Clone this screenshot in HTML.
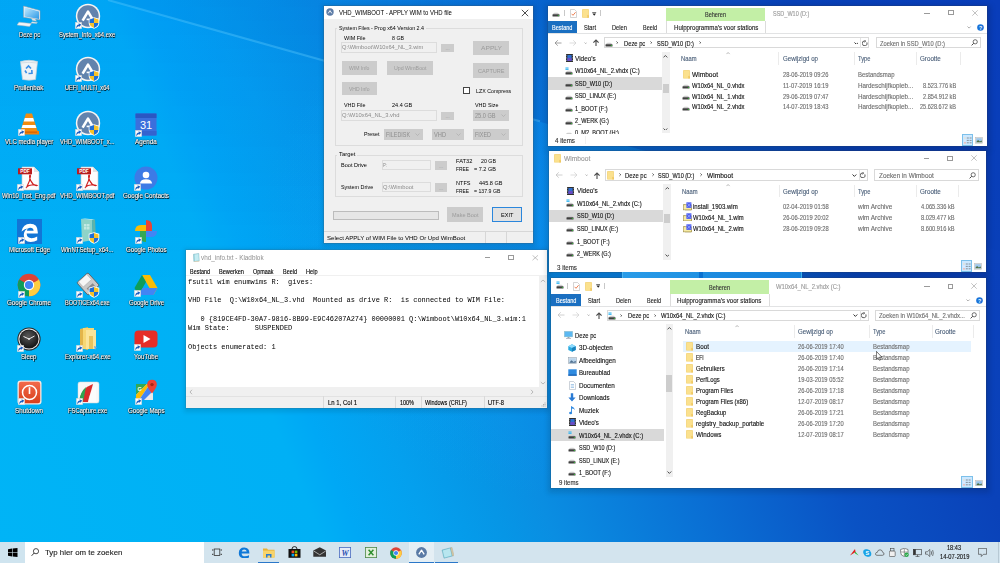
<!DOCTYPE html><html><head><meta charset="utf-8"><style>
html,body{margin:0;padding:0;}
body{width:1000px;height:563px;overflow:hidden;position:relative;font-family:"Liberation Sans",sans-serif;}
.a{position:absolute;}
.t{position:absolute;white-space:pre;line-height:1;}
.k{-webkit-text-stroke:0.12px currentColor;}
.m{font-family:"Liberation Mono",monospace;}
</style></head><body><div class="a" style="left:0.00px;top:0.00px;width:1000.00px;height:563.00px;background:linear-gradient(68deg,#00b4f6 0%,#00b0f5 27%,#00a8f5 30%,#04a0ee 36%,#0696e6 42%,#0a8ee2 46%,#0a6fd4 59%,#0a52c4 71%,#0a42b9 83%,#0a3ebc 100%);"></div><div class="a" style="left:0.00px;top:0.00px;width:1000.00px;height:563.00px;background:linear-gradient(180deg,rgba(0,60,250,.09) 0%,rgba(0,60,250,.05) 25%,rgba(0,60,250,0) 55%);-webkit-mask-image:linear-gradient(90deg,#000 0%,#000 35%,transparent 60%);"></div><svg class="a" style="left:0.00px;top:0.00px;" width="1000" height="563" viewBox="0 0 1000 563"><defs><radialGradient id="lg" gradientUnits="userSpaceOnUse" cx="560" cy="230" r="300" gradientTransform="translate(560 230) scale(1 0.9) translate(-560 -230)"><stop offset="0" stop-color="#0aa0fa" stop-opacity="0.42"/><stop offset="0.6" stop-color="#0aa0fa" stop-opacity="0.22"/><stop offset="1" stop-color="#0aa0fa" stop-opacity="0"/></radialGradient><clipPath id="bc"><path d="M100 0 L1000 249 L1000 563 L0 563 L0 0Z"/></clipPath></defs><rect x="0" y="0" width="1000" height="563" fill="url(#lg)" clip-path="url(#bc)"/><rect x="0" y="0" width="1000" height="563" fill="url(#lg)" opacity="0.35"/><defs><filter id="bb" x="-5%" y="-50%" width="110%" height="200%"><feGaussianBlur stdDeviation="0.7"/></filter></defs><path d="M108 0 L1000 250.7 L1000 0Z" fill="#003a9a" opacity="0.05"/><line x1="108" y1="0" x2="540" y2="121.3" stroke="#66d0ff" stroke-width="2" opacity="0.35" filter="url(#bb)"/></svg><div class="t k" style="left:18.55px;top:31.90px;font-size:6.6px;color:#fff;transform:scaleX(0.8715);transform-origin:0 0;text-shadow:0.6px 0.7px 0.5px #000,0 0 1.4px #000,0 0 1px rgba(0,0,0,.6);">Deze pc</div><div class="t k" style="left:59.40px;top:31.90px;font-size:6.6px;color:#fff;transform:scaleX(0.8855);transform-origin:0 0;text-shadow:0.6px 0.7px 0.5px #000,0 0 1.4px #000,0 0 1px rgba(0,0,0,.6);">System_Info_x64.exe</div><div class="t k" style="left:14.45px;top:85.40px;font-size:6.6px;color:#fff;transform:scaleX(0.9396);transform-origin:0 0;text-shadow:0.6px 0.7px 0.5px #000,0 0 1.4px #000,0 0 1px rgba(0,0,0,.6);">Prullenbak</div><div class="t k" style="left:65.30px;top:85.40px;font-size:6.6px;color:#fff;transform:scaleX(0.8486);transform-origin:0 0;text-shadow:0.6px 0.7px 0.5px #000,0 0 1.4px #000,0 0 1px rgba(0,0,0,.6);">UEFI_MULTI_x64</div><div class="t k" style="left:4.95px;top:139.40px;font-size:6.6px;color:#fff;transform:scaleX(0.9208);transform-origin:0 0;text-shadow:0.6px 0.7px 0.5px #000,0 0 1.4px #000,0 0 1px rgba(0,0,0,.6);">VLC media player</div><div class="t k" style="left:60.25px;top:139.40px;font-size:6.6px;color:#fff;transform:scaleX(0.8743);transform-origin:0 0;text-shadow:0.6px 0.7px 0.5px #000,0 0 1.4px #000,0 0 1px rgba(0,0,0,.6);">VHD_WIMBOOT_x...</div><div class="t k" style="left:135.20px;top:139.40px;font-size:6.6px;color:#fff;transform:scaleX(0.9581);transform-origin:0 0;text-shadow:0.6px 0.7px 0.5px #000,0 0 1.4px #000,0 0 1px rgba(0,0,0,.6);">Agenda</div><div class="t k" style="left:2.35px;top:193.40px;font-size:6.6px;color:#fff;transform:scaleX(0.9001);transform-origin:0 0;text-shadow:0.6px 0.7px 0.5px #000,0 0 1.4px #000,0 0 1px rgba(0,0,0,.6);">Win10_Inst_Eng.pdf</div><div class="t k" style="left:60.25px;top:193.40px;font-size:6.6px;color:#fff;transform:scaleX(0.9062);transform-origin:0 0;text-shadow:0.6px 0.7px 0.5px #000,0 0 1.4px #000,0 0 1px rgba(0,0,0,.6);">VHD_WIMBOOT.pdf</div><div class="t k" style="left:123.10px;top:193.40px;font-size:6.6px;color:#fff;transform:scaleX(0.9357);transform-origin:0 0;text-shadow:0.6px 0.7px 0.5px #000,0 0 1.4px #000,0 0 1px rgba(0,0,0,.6);">Google Contacts</div><div class="t k" style="left:8.50px;top:246.90px;font-size:6.6px;color:#fff;transform:scaleX(0.9360);transform-origin:0 0;text-shadow:0.6px 0.7px 0.5px #000,0 0 1.4px #000,0 0 1px rgba(0,0,0,.6);">Microsoft Edge</div><div class="t k" style="left:61.25px;top:246.90px;font-size:6.6px;color:#fff;transform:scaleX(0.9175);transform-origin:0 0;text-shadow:0.6px 0.7px 0.5px #000,0 0 1.4px #000,0 0 1px rgba(0,0,0,.6);">WinNTSetup_x64...</div><div class="t k" style="left:125.85px;top:246.90px;font-size:6.6px;color:#fff;transform:scaleX(0.9276);transform-origin:0 0;text-shadow:0.6px 0.7px 0.5px #000,0 0 1.4px #000,0 0 1px rgba(0,0,0,.6);">Google Photos</div><div class="t k" style="left:7.10px;top:300.40px;font-size:6.6px;color:#fff;transform:scaleX(0.9445);transform-origin:0 0;text-shadow:0.6px 0.7px 0.5px #000,0 0 1.4px #000,0 0 1px rgba(0,0,0,.6);">Google Chrome</div><div class="t k" style="left:65.20px;top:300.40px;font-size:6.6px;color:#fff;transform:scaleX(0.8444);transform-origin:0 0;text-shadow:0.6px 0.7px 0.5px #000,0 0 1.4px #000,0 0 1px rgba(0,0,0,.6);">BOOTICEx64.exe</div><div class="t k" style="left:128.60px;top:300.40px;font-size:6.6px;color:#fff;transform:scaleX(0.9087);transform-origin:0 0;text-shadow:0.6px 0.7px 0.5px #000,0 0 1.4px #000,0 0 1px rgba(0,0,0,.6);">Google Drive</div><div class="t k" style="left:21.35px;top:354.40px;font-size:6.6px;color:#fff;transform:scaleX(0.9183);transform-origin:0 0;text-shadow:0.6px 0.7px 0.5px #000,0 0 1.4px #000,0 0 1px rgba(0,0,0,.6);">Sleep</div><div class="t k" style="left:64.70px;top:354.40px;font-size:6.6px;color:#fff;transform:scaleX(0.9141);transform-origin:0 0;text-shadow:0.6px 0.7px 0.5px #000,0 0 1.4px #000,0 0 1px rgba(0,0,0,.6);">Explorer-x64.exe</div><div class="t k" style="left:134.00px;top:354.40px;font-size:6.6px;color:#fff;transform:scaleX(0.9331);transform-origin:0 0;text-shadow:0.6px 0.7px 0.5px #000,0 0 1.4px #000,0 0 1px rgba(0,0,0,.6);">YouTube</div><div class="t k" style="left:15.10px;top:407.90px;font-size:6.6px;color:#fff;transform:scaleX(0.9539);transform-origin:0 0;text-shadow:0.6px 0.7px 0.5px #000,0 0 1.4px #000,0 0 1px rgba(0,0,0,.6);">Shutdown</div><div class="t k" style="left:67.90px;top:407.90px;font-size:6.6px;color:#fff;transform:scaleX(0.8832);transform-origin:0 0;text-shadow:0.6px 0.7px 0.5px #000,0 0 1.4px #000,0 0 1px rgba(0,0,0,.6);">FSCapture.exe</div><div class="t k" style="left:127.85px;top:407.90px;font-size:6.6px;color:#fff;transform:scaleX(0.9299);transform-origin:0 0;text-shadow:0.6px 0.7px 0.5px #000,0 0 1.4px #000,0 0 1px rgba(0,0,0,.6);">Google Maps</div><svg class="a" style="left:17.10px;top:5.00px;" width="24" height="22" viewBox="0 0 24 22"><defs><linearGradient id="gpc" x1="0" y1="0" x2="1" y2="1"><stop offset="0" stop-color="#c4ecff"/><stop offset="1" stop-color="#2b98e6"/></linearGradient></defs><path d="M6.5 1 L23 5.6 L23 14.8 L6.5 12.2 Z" fill="#f0f6f9" stroke="#8aa0b0" stroke-width="0.6"/><path d="M7.5 2.3 L22 6.4 L22 14 L7.5 11.6 Z" fill="url(#gpc)"/><path d="M14 13 L15.5 15.6 L19.5 16.3 L18 13.6Z" fill="#dde5ea" stroke="#a8b4bc" stroke-width="0.4"/><path d="M2 17.2 L14.5 18.6 L12.5 21.5 L0 20 Z" fill="#f2f4f6" stroke="#aab6c0" stroke-width="0.5"/><path d="M15 16.8 L20.5 17.5 L19.5 18.6 L14 18Z" fill="#eef1f3" stroke="#aab6c0" stroke-width="0.4"/></svg><svg class="a" style="left:74.50px;top:2.50px;" width="26" height="26" viewBox="0 0 26 26"><circle cx="13" cy="13" r="12.2" fill="#f7f5f2"/><circle cx="13" cy="13" r="10.7" fill="#6283ad"/><path d="M7.6 17.6 L13 8.6 L18.4 17.6" stroke="#fff" stroke-width="2.6" stroke-linejoin="round" fill="none"/><path d="M11.6 16.4 L14.2 16.4" stroke="#fff" stroke-width="1.6"/></svg><svg class="a" style="left:88.30px;top:16.50px;" width="12" height="12" viewBox="0 0 12 12"><path d="M6 0.3 L11.3 1.8 L11.3 6 Q11.2 10.2 6 11.8 Q0.8 10.2 0.7 6 L0.7 1.8 Z" fill="#fff"/><path d="M6 1.1 L6 6 L1.5 6 L1.5 2.4 Z" fill="#1f6fd6"/><path d="M6 1.1 L10.5 2.4 L10.5 6 L6 6Z" fill="#f7c22a"/><path d="M1.5 6 L6 6 L6 10.9 Q1.8 9.6 1.5 6Z" fill="#f7c22a"/><path d="M6 6 L10.5 6 Q10.2 9.6 6 10.9Z" fill="#1f6fd6"/></svg><svg class="a" style="left:75.10px;top:21.90px;" width="7" height="7" viewBox="0 0 7 7"><rect x="0.3" y="0.3" width="6.4" height="6.4" fill="#fcfcfc" stroke="#c8c8c8" stroke-width="0.4"/><path d="M1.2 6.2 Q1.2 2.9 4.0 2.6 L3.4 1.2 L6.2 2.5 L4.4 5.0 L4.2 3.9 Q2.4 4.1 1.2 6.2Z" fill="#1d5fc0"/></svg><svg class="a" style="left:19.10px;top:59.00px;" width="20" height="22" viewBox="0 0 20 22"><path d="M1.5 2.5 Q10 0 18.5 2.5 L16.5 20.5 Q10 21.8 3.5 20.5 Z" fill="#eef3f6" stroke="#c5d0d8" stroke-width="0.7"/><path d="M2 4 Q10 2.5 18 4" stroke="#d5dde3" stroke-width="1" fill="none"/><g fill="none" stroke="#3a8ee6" stroke-width="1.6"><path d="M7 9.5 L9.5 7 L12 9.5"/><path d="M12.8 11 L13 14.2 L9.5 14.5"/><path d="M7.6 14.2 L6 11.5"/></g></svg><svg class="a" style="left:74.50px;top:56.00px;" width="26" height="26" viewBox="0 0 26 26"><circle cx="13" cy="13" r="12.2" fill="#f7f5f2"/><circle cx="13" cy="13" r="10.7" fill="#6283ad"/><path d="M7.6 17.6 L13 8.6 L18.4 17.6" stroke="#fff" stroke-width="2.6" stroke-linejoin="round" fill="none"/><path d="M11.6 16.4 L14.2 16.4" stroke="#fff" stroke-width="1.6"/></svg><svg class="a" style="left:88.30px;top:70.00px;" width="12" height="12" viewBox="0 0 12 12"><path d="M6 0.3 L11.3 1.8 L11.3 6 Q11.2 10.2 6 11.8 Q0.8 10.2 0.7 6 L0.7 1.8 Z" fill="#fff"/><path d="M6 1.1 L6 6 L1.5 6 L1.5 2.4 Z" fill="#1f6fd6"/><path d="M6 1.1 L10.5 2.4 L10.5 6 L6 6Z" fill="#f7c22a"/><path d="M1.5 6 L6 6 L6 10.9 Q1.8 9.6 1.5 6Z" fill="#f7c22a"/><path d="M6 6 L10.5 6 Q10.2 9.6 6 10.9Z" fill="#1f6fd6"/></svg><svg class="a" style="left:75.10px;top:75.40px;" width="7" height="7" viewBox="0 0 7 7"><rect x="0.3" y="0.3" width="6.4" height="6.4" fill="#fcfcfc" stroke="#c8c8c8" stroke-width="0.4"/><path d="M1.2 6.2 Q1.2 2.9 4.0 2.6 L3.4 1.2 L6.2 2.5 L4.4 5.0 L4.2 3.9 Q2.4 4.1 1.2 6.2Z" fill="#1d5fc0"/></svg><svg class="a" style="left:18.10px;top:111.50px;" width="22" height="24" viewBox="0 0 22 24"><path d="M8 1.5 L14 1.5 L19.5 19 L2.5 19 Z" fill="#f28c0f"/><path d="M6.8 6 L15.2 6 L16.3 9.5 L5.7 9.5Z" fill="#fff"/><path d="M4.6 13 L17.4 13 L18.4 16 L3.6 16Z" fill="#fff"/><path d="M1 19 L21 19 L21 22.5 L1 22.5Z" fill="#ef7f0a"/><path d="M3 19.5 L19 19.5 L19 21 L3 21Z" fill="#d56a05"/></svg><svg class="a" style="left:18.10px;top:129.00px;" width="7" height="7" viewBox="0 0 7 7"><rect x="0.3" y="0.3" width="6.4" height="6.4" fill="#fcfcfc" stroke="#c8c8c8" stroke-width="0.4"/><path d="M1.2 6.2 Q1.2 2.9 4.0 2.6 L3.4 1.2 L6.2 2.5 L4.4 5.0 L4.2 3.9 Q2.4 4.1 1.2 6.2Z" fill="#1d5fc0"/></svg><svg class="a" style="left:74.50px;top:110.00px;" width="26" height="26" viewBox="0 0 26 26"><circle cx="13" cy="13" r="12.2" fill="#f7f5f2"/><circle cx="13" cy="13" r="10.7" fill="#6283ad"/><path d="M7.6 17.6 L13 8.6 L18.4 17.6" stroke="#fff" stroke-width="2.6" stroke-linejoin="round" fill="none"/><path d="M11.6 16.4 L14.2 16.4" stroke="#fff" stroke-width="1.6"/></svg><svg class="a" style="left:88.30px;top:124.00px;" width="12" height="12" viewBox="0 0 12 12"><path d="M6 0.3 L11.3 1.8 L11.3 6 Q11.2 10.2 6 11.8 Q0.8 10.2 0.7 6 L0.7 1.8 Z" fill="#fff"/><path d="M6 1.1 L6 6 L1.5 6 L1.5 2.4 Z" fill="#1f6fd6"/><path d="M6 1.1 L10.5 2.4 L10.5 6 L6 6Z" fill="#f7c22a"/><path d="M1.5 6 L6 6 L6 10.9 Q1.8 9.6 1.5 6Z" fill="#f7c22a"/><path d="M6 6 L10.5 6 Q10.2 9.6 6 10.9Z" fill="#1f6fd6"/></svg><svg class="a" style="left:75.10px;top:129.40px;" width="7" height="7" viewBox="0 0 7 7"><rect x="0.3" y="0.3" width="6.4" height="6.4" fill="#fcfcfc" stroke="#c8c8c8" stroke-width="0.4"/><path d="M1.2 6.2 Q1.2 2.9 4.0 2.6 L3.4 1.2 L6.2 2.5 L4.4 5.0 L4.2 3.9 Q2.4 4.1 1.2 6.2Z" fill="#1d5fc0"/></svg><svg class="a" style="left:135.10px;top:112.50px;" width="22" height="23" viewBox="0 0 22 23"><rect x="0.5" y="0.5" width="21" height="22" rx="1" fill="#3b6fdc"/><rect x="0.5" y="0.5" width="21" height="4.5" fill="#2a57c2"/><rect x="0.5" y="18" width="21" height="4.5" fill="#3463cf"/><text x="11" y="15.8" font-family="Liberation Sans" font-size="11" fill="#fff" text-anchor="middle">31</text></svg><svg class="a" style="left:134.60px;top:129.50px;" width="7" height="7" viewBox="0 0 7 7"><rect x="0.3" y="0.3" width="6.4" height="6.4" fill="#fcfcfc" stroke="#c8c8c8" stroke-width="0.4"/><path d="M1.2 6.2 Q1.2 2.9 4.0 2.6 L3.4 1.2 L6.2 2.5 L4.4 5.0 L4.2 3.9 Q2.4 4.1 1.2 6.2Z" fill="#1d5fc0"/></svg><svg class="a" style="left:18.30px;top:165.50px;" width="24" height="25" viewBox="0 0 24 25"><path d="M4 1 L16 1 L21 6 L21 24 L4 24 Z" fill="#fdfdfd" stroke="#c9c9c9" stroke-width="0.6"/><path d="M16 1 L16 6 L21 6Z" fill="#e3e3e3"/><rect x="0" y="2.3" width="14" height="6" fill="#b81d1d"/><text x="7" y="7.2" font-family="Liberation Sans" font-size="4.8" font-weight="bold" fill="#fff" text-anchor="middle">PDF</text><path d="M9 20.5 Q12 15 12.5 10 Q12.2 7.5 11.6 10 Q11.5 14 15 18 Q17.5 20 19 19.5 Q17 18 11 19.5 Q7.5 21.5 8.5 22" stroke="#d0201f" stroke-width="1.2" fill="none"/></svg><svg class="a" style="left:17.10px;top:183.50px;" width="7" height="7" viewBox="0 0 7 7"><rect x="0.3" y="0.3" width="6.4" height="6.4" fill="#fcfcfc" stroke="#c8c8c8" stroke-width="0.4"/><path d="M1.2 6.2 Q1.2 2.9 4.0 2.6 L3.4 1.2 L6.2 2.5 L4.4 5.0 L4.2 3.9 Q2.4 4.1 1.2 6.2Z" fill="#1d5fc0"/></svg><svg class="a" style="left:76.70px;top:165.50px;" width="24" height="25" viewBox="0 0 24 25"><path d="M4 1 L16 1 L21 6 L21 24 L4 24 Z" fill="#fdfdfd" stroke="#c9c9c9" stroke-width="0.6"/><path d="M16 1 L16 6 L21 6Z" fill="#e3e3e3"/><rect x="0" y="2.3" width="14" height="6" fill="#b81d1d"/><text x="7" y="7.2" font-family="Liberation Sans" font-size="4.8" font-weight="bold" fill="#fff" text-anchor="middle">PDF</text><path d="M9 20.5 Q12 15 12.5 10 Q12.2 7.5 11.6 10 Q11.5 14 15 18 Q17.5 20 19 19.5 Q17 18 11 19.5 Q7.5 21.5 8.5 22" stroke="#d0201f" stroke-width="1.2" fill="none"/></svg><svg class="a" style="left:75.50px;top:183.50px;" width="7" height="7" viewBox="0 0 7 7"><rect x="0.3" y="0.3" width="6.4" height="6.4" fill="#fcfcfc" stroke="#c8c8c8" stroke-width="0.4"/><path d="M1.2 6.2 Q1.2 2.9 4.0 2.6 L3.4 1.2 L6.2 2.5 L4.4 5.0 L4.2 3.9 Q2.4 4.1 1.2 6.2Z" fill="#1d5fc0"/></svg><svg class="a" style="left:134.10px;top:165.50px;" width="24" height="24" viewBox="0 0 24 24"><circle cx="12" cy="12" r="11.5" fill="#3d7be6"/><circle cx="12" cy="9" r="3.3" fill="#fff"/><path d="M5.8 17.5 Q6.5 13.2 12 13.2 Q17.5 13.2 18.2 17.5 Z" fill="#fff"/></svg><svg class="a" style="left:134.10px;top:183.50px;" width="7" height="7" viewBox="0 0 7 7"><rect x="0.3" y="0.3" width="6.4" height="6.4" fill="#fcfcfc" stroke="#c8c8c8" stroke-width="0.4"/><path d="M1.2 6.2 Q1.2 2.9 4.0 2.6 L3.4 1.2 L6.2 2.5 L4.4 5.0 L4.2 3.9 Q2.4 4.1 1.2 6.2Z" fill="#1d5fc0"/></svg><svg class="a" style="left:17.10px;top:219.00px;" width="25" height="25" viewBox="0 0 25 25"><rect x="0" y="0" width="25" height="25" fill="#1275d6"/><path d="M4.5 12.5 Q6 4.8 13.2 4.8 Q20.8 4.8 20.8 13.2 L20.8 14.6 L9.6 14.6 Q10 19.2 14.6 19.2 Q17.6 19.2 20.2 17.6 L20.2 21.2 Q17.6 23 13.6 23 Q6.8 23 6.8 16 Q6.8 10.8 11.6 9.2 Q7.6 9.8 4.5 12.5Z M9.8 11.8 L16.6 11.8 Q16.4 8.8 13.2 8.8 Q10.4 8.8 9.8 11.8Z" fill="#fff" fill-rule="evenodd"/></svg><svg class="a" style="left:17.60px;top:237.00px;" width="7" height="7" viewBox="0 0 7 7"><rect x="0.3" y="0.3" width="6.4" height="6.4" fill="#fcfcfc" stroke="#c8c8c8" stroke-width="0.4"/><path d="M1.2 6.2 Q1.2 2.9 4.0 2.6 L3.4 1.2 L6.2 2.5 L4.4 5.0 L4.2 3.9 Q2.4 4.1 1.2 6.2Z" fill="#1d5fc0"/></svg><svg class="a" style="left:76.50px;top:218.00px;" width="22" height="26" viewBox="0 0 22 26"><path d="M4 1 L15 2 L16 22 L5 24 Z" fill="#8fd3c8"/><path d="M4 1 L8 0.5 L18 1.5 L15 2Z" fill="#c6ece6"/><path d="M15 2 L18 1.5 L19 21 L16 22Z" fill="#5fb3a8"/><g fill="#d9f3ef" opacity="0.7"><rect x="7" y="6" width="2.5" height="2.5"/><rect x="10" y="6" width="2.5" height="2.5"/><rect x="7" y="9" width="2.5" height="2.5"/><rect x="10" y="9" width="2.5" height="2.5"/></g></svg><svg class="a" style="left:88.00px;top:232.00px;" width="12" height="12" viewBox="0 0 12 12"><path d="M6 0.3 L11.3 1.8 L11.3 6 Q11.2 10.2 6 11.8 Q0.8 10.2 0.7 6 L0.7 1.8 Z" fill="#fff"/><path d="M6 1.1 L6 6 L1.5 6 L1.5 2.4 Z" fill="#1f6fd6"/><path d="M6 1.1 L10.5 2.4 L10.5 6 L6 6Z" fill="#f7c22a"/><path d="M1.5 6 L6 6 L6 10.9 Q1.8 9.6 1.5 6Z" fill="#f7c22a"/><path d="M6 6 L10.5 6 Q10.2 9.6 6 10.9Z" fill="#1f6fd6"/></svg><svg class="a" style="left:75.50px;top:237.00px;" width="7" height="7" viewBox="0 0 7 7"><rect x="0.3" y="0.3" width="6.4" height="6.4" fill="#fcfcfc" stroke="#c8c8c8" stroke-width="0.4"/><path d="M1.2 6.2 Q1.2 2.9 4.0 2.6 L3.4 1.2 L6.2 2.5 L4.4 5.0 L4.2 3.9 Q2.4 4.1 1.2 6.2Z" fill="#1d5fc0"/></svg><svg class="a" style="left:134.10px;top:219.00px;" width="24" height="24" viewBox="0 0 24 24"><g transform="translate(12,12)"><path d="M0 0 L0 -11 Q6 -11 6 -5 L6 0Z" fill="#ea4335" transform="rotate(0)"/><path d="M0 0 L0 -11 Q6 -11 6 -5 L6 0Z" fill="#4285f4" transform="rotate(90)"/><path d="M0 0 L0 -11 Q6 -11 6 -5 L6 0Z" fill="#34a853" transform="rotate(180)"/><path d="M0 0 L0 -11 Q6 -11 6 -5 L6 0Z" fill="#fbbc04" transform="rotate(270)"/></g></svg><svg class="a" style="left:135.10px;top:237.00px;" width="7" height="7" viewBox="0 0 7 7"><rect x="0.3" y="0.3" width="6.4" height="6.4" fill="#fcfcfc" stroke="#c8c8c8" stroke-width="0.4"/><path d="M1.2 6.2 Q1.2 2.9 4.0 2.6 L3.4 1.2 L6.2 2.5 L4.4 5.0 L4.2 3.9 Q2.4 4.1 1.2 6.2Z" fill="#1d5fc0"/></svg><svg class="a" style="left:17.10px;top:272.50px;" width="24" height="24" viewBox="0 0 24 24"><circle cx="12" cy="12" r="11.3" fill="#db4437"/><path d="M12 12 L2.2 6.4 A11.3 11.3 0 0 0 12 23.3 Z" fill="#0f9d58"/><path d="M12 12 L12 23.3 A11.3 11.3 0 0 0 21.8 6.35 Z" fill="#ffcd40"/><path d="M12 6.8 L21.8 6.8 L12 12Z" fill="#db4437"/><circle cx="12" cy="12" r="5.2" fill="#fff"/><circle cx="12" cy="12" r="4.1" fill="#4285f4"/></svg><svg class="a" style="left:17.60px;top:290.50px;" width="7" height="7" viewBox="0 0 7 7"><rect x="0.3" y="0.3" width="6.4" height="6.4" fill="#fcfcfc" stroke="#c8c8c8" stroke-width="0.4"/><path d="M1.2 6.2 Q1.2 2.9 4.0 2.6 L3.4 1.2 L6.2 2.5 L4.4 5.0 L4.2 3.9 Q2.4 4.1 1.2 6.2Z" fill="#1d5fc0"/></svg><svg class="a" style="left:75.50px;top:271.50px;" width="24" height="24" viewBox="0 0 24 24"><g transform="rotate(-42 12 12)"><rect x="4.5" y="3.5" width="15" height="17" rx="1.5" fill="#c9c9c9" stroke="#5a5a5a" stroke-width="0.8"/><rect x="6.5" y="4" width="11" height="7" fill="#f6f6f6" stroke="#9a9a9a" stroke-width="0.4"/><rect x="8" y="14.5" width="8" height="6" fill="#8a8a8a"/></g></svg><svg class="a" style="left:88.00px;top:285.50px;" width="12" height="12" viewBox="0 0 12 12"><path d="M6 0.3 L11.3 1.8 L11.3 6 Q11.2 10.2 6 11.8 Q0.8 10.2 0.7 6 L0.7 1.8 Z" fill="#fff"/><path d="M6 1.1 L6 6 L1.5 6 L1.5 2.4 Z" fill="#1f6fd6"/><path d="M6 1.1 L10.5 2.4 L10.5 6 L6 6Z" fill="#f7c22a"/><path d="M1.5 6 L6 6 L6 10.9 Q1.8 9.6 1.5 6Z" fill="#f7c22a"/><path d="M6 6 L10.5 6 Q10.2 9.6 6 10.9Z" fill="#1f6fd6"/></svg><svg class="a" style="left:75.50px;top:290.50px;" width="7" height="7" viewBox="0 0 7 7"><rect x="0.3" y="0.3" width="6.4" height="6.4" fill="#fcfcfc" stroke="#c8c8c8" stroke-width="0.4"/><path d="M1.2 6.2 Q1.2 2.9 4.0 2.6 L3.4 1.2 L6.2 2.5 L4.4 5.0 L4.2 3.9 Q2.4 4.1 1.2 6.2Z" fill="#1d5fc0"/></svg><svg class="a" style="left:134.10px;top:273.50px;" width="24" height="22" viewBox="0 0 24 22"><path d="M8 1 L16 1 L23.5 14 L19.5 21 Z" fill="#fbbc04"/><path d="M8 1 L0.5 14 L4.5 21 L12 7.9Z" fill="#0f9d58"/><path d="M4.5 21 L19.5 21 L23.5 14 L8.5 14Z" fill="#4285f4"/></svg><svg class="a" style="left:134.10px;top:289.50px;" width="7" height="7" viewBox="0 0 7 7"><rect x="0.3" y="0.3" width="6.4" height="6.4" fill="#fcfcfc" stroke="#c8c8c8" stroke-width="0.4"/><path d="M1.2 6.2 Q1.2 2.9 4.0 2.6 L3.4 1.2 L6.2 2.5 L4.4 5.0 L4.2 3.9 Q2.4 4.1 1.2 6.2Z" fill="#1d5fc0"/></svg><svg class="a" style="left:17.10px;top:326.50px;" width="24" height="24" viewBox="0 0 24 24"><defs><radialGradient id="gsl" cx="0.45" cy="0.35" r="0.7"><stop offset="0" stop-color="#5a5a5a"/><stop offset="1" stop-color="#111"/></radialGradient></defs><circle cx="12" cy="12" r="11.6" fill="#2a2a2a"/><circle cx="12" cy="12" r="10.6" fill="#e8e8e8"/><circle cx="12" cy="12" r="9.6" fill="#1a1a1a"/><circle cx="12" cy="12" r="8.8" fill="url(#gsl)"/><path d="M12 12 L6.8 9.6 M12 12 L17.2 9.2" stroke="#fff" stroke-width="0.9" stroke-linecap="round"/><circle cx="12" cy="12" r="0.8" fill="#fff"/></svg><svg class="a" style="left:17.10px;top:344.50px;" width="7" height="7" viewBox="0 0 7 7"><rect x="0.3" y="0.3" width="6.4" height="6.4" fill="#fcfcfc" stroke="#c8c8c8" stroke-width="0.4"/><path d="M1.2 6.2 Q1.2 2.9 4.0 2.6 L3.4 1.2 L6.2 2.5 L4.4 5.0 L4.2 3.9 Q2.4 4.1 1.2 6.2Z" fill="#1d5fc0"/></svg><svg class="a" style="left:76.50px;top:325.50px;" width="22" height="26" viewBox="0 0 22 26"><path d="M3 3 L11 1 L11 24 L3 22Z" fill="#e3b54a"/><path d="M6 2 L17 2 L17 23 L6 23Z" fill="#f7d774"/><path d="M9 4 L19 4 L19 23 L9 23Z" fill="#fbe49a"/><path d="M12 10 L16 10 L16 23 L12 23Z" fill="#e9c35c"/><path d="M17 20 L20 21 L18 24Z" fill="#6fa8dc"/></svg><svg class="a" style="left:76.00px;top:344.50px;" width="7" height="7" viewBox="0 0 7 7"><rect x="0.3" y="0.3" width="6.4" height="6.4" fill="#fcfcfc" stroke="#c8c8c8" stroke-width="0.4"/><path d="M1.2 6.2 Q1.2 2.9 4.0 2.6 L3.4 1.2 L6.2 2.5 L4.4 5.0 L4.2 3.9 Q2.4 4.1 1.2 6.2Z" fill="#1d5fc0"/></svg><svg class="a" style="left:134.10px;top:329.50px;" width="24" height="18" viewBox="0 0 24 18"><rect x="0.5" y="0.5" width="23" height="17" rx="4" fill="#e52d27"/><path d="M9.5 5 L16.5 9 L9.5 13Z" fill="#fff"/></svg><svg class="a" style="left:134.10px;top:343.50px;" width="7" height="7" viewBox="0 0 7 7"><rect x="0.3" y="0.3" width="6.4" height="6.4" fill="#fcfcfc" stroke="#c8c8c8" stroke-width="0.4"/><path d="M1.2 6.2 Q1.2 2.9 4.0 2.6 L3.4 1.2 L6.2 2.5 L4.4 5.0 L4.2 3.9 Q2.4 4.1 1.2 6.2Z" fill="#1d5fc0"/></svg><svg class="a" style="left:17.10px;top:380.00px;" width="25" height="25" viewBox="0 0 25 25"><defs><linearGradient id="gsd" x1="0" y1="0" x2="0" y2="1"><stop offset="0" stop-color="#f26a4b"/><stop offset="1" stop-color="#d8401c"/></linearGradient></defs><rect x="0.5" y="0.5" width="24" height="24" rx="3" fill="#f7e9e4"/><rect x="1.8" y="1.8" width="21.4" height="21.4" rx="2.2" fill="url(#gsd)"/><circle cx="12.5" cy="12.5" r="7" stroke="#fff" stroke-width="1.5" fill="none"/><rect x="11.7" y="7.2" width="1.6" height="6.8" fill="#fff"/></svg><svg class="a" style="left:17.60px;top:398.00px;" width="7" height="7" viewBox="0 0 7 7"><rect x="0.3" y="0.3" width="6.4" height="6.4" fill="#fcfcfc" stroke="#c8c8c8" stroke-width="0.4"/><path d="M1.2 6.2 Q1.2 2.9 4.0 2.6 L3.4 1.2 L6.2 2.5 L4.4 5.0 L4.2 3.9 Q2.4 4.1 1.2 6.2Z" fill="#1d5fc0"/></svg><svg class="a" style="left:75.50px;top:380.00px;" width="24" height="24" viewBox="0 0 24 24"><rect x="2" y="2" width="21" height="21" rx="2" fill="#f8f8f8" stroke="#d8d8d8" stroke-width="0.5"/><path d="M3 22 Q5 8 17 4 L12 22Z" fill="#d92b2b"/><path d="M3 22 Q4 12 10 7 L7 22Z" fill="#2ea44f"/><path d="M12 22 Q14 10 20 6 L20 22Z" fill="#fff" opacity="0.6"/></svg><svg class="a" style="left:76.00px;top:398.00px;" width="7" height="7" viewBox="0 0 7 7"><rect x="0.3" y="0.3" width="6.4" height="6.4" fill="#fcfcfc" stroke="#c8c8c8" stroke-width="0.4"/><path d="M1.2 6.2 Q1.2 2.9 4.0 2.6 L3.4 1.2 L6.2 2.5 L4.4 5.0 L4.2 3.9 Q2.4 4.1 1.2 6.2Z" fill="#1d5fc0"/></svg><svg class="a" style="left:134.10px;top:379.00px;" width="24" height="24" viewBox="0 0 24 24"><path d="M2 5 L19 5 L19 21 L2 21Z" fill="#e9e9e9"/><path d="M2 5 L13 5 L2 16Z" fill="#34a853"/><path d="M2 16 L13 5 L16 5 L5 21 L2 21Z" fill="#fbbc04"/><path d="M5 21 L16 5 L19 8 L19 21Z" fill="#4285f4"/><path d="M10 21 L19 12 L19 21Z" fill="#e9e9e9"/><text x="3.6" y="11.6" font-family="Liberation Sans" font-size="5.5" font-weight="bold" fill="#fff">G</text><path d="M18 0.8 Q22.8 0.8 22.8 5.6 Q22.8 8.8 18 14.5 Q13.2 8.8 13.2 5.6 Q13.2 0.8 18 0.8Z" fill="#ea4335"/><circle cx="18" cy="5.6" r="1.7" fill="#a52714"/></svg><svg class="a" style="left:134.60px;top:398.00px;" width="7" height="7" viewBox="0 0 7 7"><rect x="0.3" y="0.3" width="6.4" height="6.4" fill="#fcfcfc" stroke="#c8c8c8" stroke-width="0.4"/><path d="M1.2 6.2 Q1.2 2.9 4.0 2.6 L3.4 1.2 L6.2 2.5 L4.4 5.0 L4.2 3.9 Q2.4 4.1 1.2 6.2Z" fill="#1d5fc0"/></svg><div class="a" style="left:322.00px;top:5.00px;width:214.00px;height:242.00px;background:rgba(0,0,0,.10);filter:blur(2px);"></div><div class="a" style="left:324.00px;top:6.00px;width:209.00px;height:237.00px;background:#f0f0f0;box-shadow:0 0 0 0.5px rgba(80,80,80,.45);"></div><div class="a" style="left:324.00px;top:6.00px;width:209.00px;height:13.00px;background:#fff;"></div><svg class="a" style="left:326.30px;top:8.30px;" width="8" height="8" viewBox="0 0 8 8"><circle cx="4" cy="4" r="3.7" fill="#5b7ba6"/><path d="M2.2 5.4 L4 2.6 L5.8 5.4" stroke="#fff" stroke-width="0.9" stroke-linejoin="round" fill="none"/></svg><div class="t" style="left:338.50px;top:9.87px;font-size:6.3px;color:#000;transform:scaleX(0.9494);transform-origin:0 0;">VHD_WIMBOOT - APPLY WIM to VHD file</div><svg class="a" style="left:520.50px;top:8.50px;" width="8" height="8" viewBox="0 0 8 8"><path d="M0.8 0.8 L7.2 7.2 M7.2 0.8 L0.8 7.2" stroke="#222" stroke-width="0.8"/></svg><div class="a" style="left:334.50px;top:28.00px;width:188.50px;height:118.00px;border:1px solid #dcdcdc;box-sizing:border-box;"></div><div class="a" style="left:336.80px;top:25.00px;width:89.20px;height:6.00px;background:#f0f0f0;"></div><div class="t" style="left:338.80px;top:25.33px;font-size:6.2px;color:#000;transform:scaleX(0.8646);transform-origin:0 0;">System Files - Prog x64 Version 2.4</div><div class="t" style="left:344.20px;top:34.93px;font-size:6.2px;color:#000;transform:scaleX(0.8834);transform-origin:0 0;">WIM File</div><div class="t" style="left:392.00px;top:34.93px;font-size:6.2px;color:#000;transform:scaleX(0.8494);transform-origin:0 0;">8 GB</div><div class="a" style="left:341.40px;top:42.40px;width:95.80px;height:10.70px;background:#f0f0f0;border:1px solid #dcdcdc;box-sizing:border-box;"></div><div class="t" style="left:342.30px;top:45.35px;font-size:5.9px;color:#8a8a8a;transform:scaleX(0.9710);transform-origin:0 0;">Q:\Wimboot\W10x64_NL_3.wim</div><div class="a" style="left:441.00px;top:44.00px;width:13.00px;height:8.00px;background:#cccccc;"></div><div class="t" style="left:445.42px;top:46.30px;font-size:5px;color:#9b9b9b;">...</div><div class="a" style="left:473.00px;top:41.00px;width:36.00px;height:14.00px;background:#cccccc;"></div><div class="t" style="left:480.50px;top:45.43px;font-size:6.2px;color:#9b9b9b;transform:scaleX(1.0753);transform-origin:0 0;">APPLY</div><div class="a" style="left:341.80px;top:61.20px;width:35.10px;height:13.50px;background:#cccccc;"></div><div class="t" style="left:349.10px;top:65.38px;font-size:6.2px;color:#9b9b9b;transform:scaleX(0.8265);transform-origin:0 0;">WIM Info</div><div class="a" style="left:387.20px;top:61.20px;width:45.80px;height:13.50px;background:#cccccc;"></div><div class="t" style="left:393.85px;top:65.38px;font-size:6.2px;color:#9b9b9b;transform:scaleX(0.8498);transform-origin:0 0;">Upd WimBoot</div><div class="a" style="left:473.00px;top:63.00px;width:36.00px;height:14.80px;background:#cccccc;"></div><div class="t" style="left:477.75px;top:67.83px;font-size:6.2px;color:#9b9b9b;transform:scaleX(0.8945);transform-origin:0 0;">CAPTURE</div><div class="a" style="left:341.80px;top:82.00px;width:35.10px;height:13.00px;background:#cccccc;"></div><div class="t" style="left:349.10px;top:85.93px;font-size:6.2px;color:#9b9b9b;transform:scaleX(0.8150);transform-origin:0 0;">VHD Info</div><div class="a" style="left:463.00px;top:87.00px;width:6.60px;height:6.60px;background:#fff;border:0.5px solid #444;box-sizing:border-box;"></div><div class="t" style="left:475.80px;top:87.63px;font-size:6.2px;color:#000;transform:scaleX(0.8538);transform-origin:0 0;">LZX Compress</div><div class="t" style="left:344.20px;top:102.33px;font-size:6.2px;color:#000;transform:scaleX(0.8709);transform-origin:0 0;">VHD File</div><div class="t" style="left:392.00px;top:102.33px;font-size:6.2px;color:#000;transform:scaleX(0.8925);transform-origin:0 0;">24.4 GB</div><div class="t" style="left:475.00px;top:102.33px;font-size:6.2px;color:#000;transform:scaleX(0.8744);transform-origin:0 0;">VHD Size</div><div class="a" style="left:341.40px;top:110.00px;width:95.80px;height:10.50px;background:#f0f0f0;border:1px solid #dcdcdc;box-sizing:border-box;"></div><div class="t" style="left:342.30px;top:112.85px;font-size:5.9px;color:#8a8a8a;transform:scaleX(0.9906);transform-origin:0 0;">Q:\W10x64_NL_3.vhd</div><div class="a" style="left:441.00px;top:112.00px;width:13.00px;height:7.50px;background:#cccccc;"></div><div class="t" style="left:445.42px;top:114.05px;font-size:5px;color:#9b9b9b;">...</div><div class="a" style="left:473.00px;top:110.00px;width:36.00px;height:10.50px;background:#cccccc;"></div><div class="t" style="left:475.00px;top:112.62px;font-size:6.3px;color:#8e8e8e;transform:scaleX(0.8913);transform-origin:0 0;">25.0 GB</div><svg class="a" style="left:501.00px;top:113.75px;" width="5" height="3" viewBox="0 0 5 3"><path d="M0.5 0.5 L2.5 2.5 L4.5 0.5" stroke="#a8a8a8" stroke-width="0.6" fill="none"/></svg><div class="t" style="left:364.00px;top:130.53px;font-size:6.2px;color:#000;transform:scaleX(0.8651);transform-origin:0 0;">Preset</div><div class="a" style="left:384.00px;top:128.80px;width:39.00px;height:10.80px;background:#cccccc;"></div><div class="t" style="left:386.00px;top:131.57px;font-size:6.3px;color:#8e8e8e;transform:scaleX(0.8569);transform-origin:0 0;">FILEDISK</div><svg class="a" style="left:415.00px;top:132.70px;" width="5" height="3" viewBox="0 0 5 3"><path d="M0.5 0.5 L2.5 2.5 L4.5 0.5" stroke="#a8a8a8" stroke-width="0.6" fill="none"/></svg><div class="a" style="left:432.00px;top:128.80px;width:31.60px;height:10.80px;background:#cccccc;"></div><div class="t" style="left:434.00px;top:131.57px;font-size:6.3px;color:#8e8e8e;transform:scaleX(0.9021);transform-origin:0 0;">VHD</div><svg class="a" style="left:455.60px;top:132.70px;" width="5" height="3" viewBox="0 0 5 3"><path d="M0.5 0.5 L2.5 2.5 L4.5 0.5" stroke="#a8a8a8" stroke-width="0.6" fill="none"/></svg><div class="a" style="left:473.00px;top:128.80px;width:36.00px;height:10.80px;background:#cccccc;"></div><div class="t" style="left:475.00px;top:131.57px;font-size:6.3px;color:#8e8e8e;transform:scaleX(0.8624);transform-origin:0 0;">FIXED</div><svg class="a" style="left:501.00px;top:132.70px;" width="5" height="3" viewBox="0 0 5 3"><path d="M0.5 0.5 L2.5 2.5 L4.5 0.5" stroke="#a8a8a8" stroke-width="0.6" fill="none"/></svg><div class="a" style="left:334.50px;top:154.50px;width:188.50px;height:42.00px;border:1px solid #dcdcdc;box-sizing:border-box;"></div><div class="a" style="left:337.00px;top:151.50px;width:20.00px;height:6.00px;background:#f0f0f0;"></div><div class="t" style="left:339.00px;top:151.43px;font-size:6.2px;color:#000;transform:scaleX(0.9460);transform-origin:0 0;">Target</div><div class="t" style="left:341.00px;top:162.33px;font-size:6.2px;color:#000;transform:scaleX(0.8983);transform-origin:0 0;">Boot Drive</div><div class="a" style="left:381.70px;top:160.40px;width:49.80px;height:9.90px;background:#f0f0f0;border:1px solid #dcdcdc;box-sizing:border-box;"></div><div class="t" style="left:383.00px;top:162.95px;font-size:5.9px;color:#8a8a8a;transform:scaleX(0.7175);transform-origin:0 0;">P:</div><div class="a" style="left:435.00px;top:161.00px;width:12.00px;height:9.00px;background:#cccccc;"></div><div class="t" style="left:438.92px;top:163.80px;font-size:5px;color:#9b9b9b;">...</div><div class="t" style="left:456.00px;top:157.73px;font-size:6.2px;color:#000;transform:scaleX(0.9268);transform-origin:0 0;">FAT32</div><div class="t" style="left:481.00px;top:157.73px;font-size:6.2px;color:#000;transform:scaleX(0.8534);transform-origin:0 0;">20 GB</div><div class="t" style="left:456.00px;top:166.33px;font-size:6.2px;color:#000;transform:scaleX(0.7862);transform-origin:0 0;">FREE</div><div class="t" style="left:474.00px;top:166.33px;font-size:6.2px;color:#000;transform:scaleX(0.8928);transform-origin:0 0;">= 7.2 GB</div><div class="t" style="left:341.00px;top:184.33px;font-size:6.2px;color:#000;transform:scaleX(0.8736);transform-origin:0 0;">System Drive</div><div class="a" style="left:381.70px;top:182.00px;width:49.80px;height:10.30px;background:#f0f0f0;border:1px solid #dcdcdc;box-sizing:border-box;"></div><div class="t" style="left:383.00px;top:184.75px;font-size:5.9px;color:#8a8a8a;transform:scaleX(0.9793);transform-origin:0 0;">Q:\Wimboot</div><div class="a" style="left:435.00px;top:183.00px;width:12.00px;height:8.50px;background:#cccccc;"></div><div class="t" style="left:438.92px;top:185.55px;font-size:5px;color:#9b9b9b;">...</div><div class="t" style="left:456.00px;top:179.73px;font-size:6.2px;color:#000;transform:scaleX(0.8958);transform-origin:0 0;">NTFS</div><div class="t" style="left:478.60px;top:179.73px;font-size:6.2px;color:#000;transform:scaleX(0.8972);transform-origin:0 0;">445.8 GB</div><div class="t" style="left:456.00px;top:188.33px;font-size:6.2px;color:#000;transform:scaleX(0.7862);transform-origin:0 0;">FREE</div><div class="t" style="left:474.00px;top:188.33px;font-size:6.2px;color:#000;transform:scaleX(0.8403);transform-origin:0 0;">= 137.9 GB</div><div class="a" style="left:333.00px;top:211.00px;width:106.00px;height:9.00px;background:#e6e6e6;border:1px solid #bcbcbc;box-sizing:border-box;"></div><div class="a" style="left:447.00px;top:207.00px;width:36.00px;height:14.60px;background:#cccccc;"></div><div class="t" style="left:451.75px;top:211.73px;font-size:6.2px;color:#9b9b9b;transform:scaleX(0.8942);transform-origin:0 0;">Make Boot</div><div class="a" style="left:491.60px;top:207.00px;width:30.40px;height:14.60px;background:#e1e1e1;border:1px solid #2a86dc;box-sizing:border-box;"></div><div class="t" style="left:500.55px;top:211.73px;font-size:6.2px;color:#000;transform:scaleX(0.9071);transform-origin:0 0;">EXIT</div><div class="a" style="left:324.00px;top:231.00px;width:209.00px;height:12.00px;background:#f0f0f0;border-top:1px solid #d7d7d7;box-sizing:border-box;"></div><div class="t" style="left:327.00px;top:234.73px;font-size:6.2px;color:#000;transform:scaleX(0.9797);transform-origin:0 0;">Select APPLY of WIM File to VHD Or Upd WimBoot</div><div class="a" style="left:484.60px;top:232.00px;width:0.70px;height:11.00px;background:#d7d7d7;"></div><div class="a" style="left:505.80px;top:232.00px;width:0.70px;height:11.00px;background:#d7d7d7;"></div><div class="a" style="left:184.00px;top:249.00px;width:366.00px;height:163.00px;background:rgba(0,0,0,.10);filter:blur(2px);"></div><div class="a" style="left:186.00px;top:250.00px;width:361.00px;height:158.00px;background:#fff;box-shadow:0 0 0 0.5px rgba(90,90,90,.35);"></div><svg class="a" style="left:191.50px;top:253.00px;" width="8" height="9" viewBox="0 0 8 9"><path d="M1.5 1.2 L6.8 0.6 L7.2 7.8 L1.8 8.4Z" fill="#8fd0dc" stroke="#6aa7b4" stroke-width="0.4"/><path d="M2.5 1.5 L6.5 1 L6.8 7.5 L2.8 8Z" fill="#c4ecf2"/><path d="M1.8 8.4 L7.2 7.8 L7.4 8.6 L2 9Z" fill="#d9c9a9"/></svg><div class="t" style="left:201.00px;top:254.67px;font-size:6.3px;color:#8f8f8f;transform:scaleX(1.0100);transform-origin:0 0;">vhd_info.txt - Kladblok</div><div class="a" style="left:485.00px;top:257.20px;width:5.00px;height:0.60px;background:#9a9a9a;"></div><div class="a" style="left:508.30px;top:255.30px;width:5.40px;height:4.60px;border:0.6px solid #9a9a9a;box-sizing:border-box;"></div><svg class="a" style="left:531.80px;top:255.00px;" width="6.5" height="5.5" viewBox="0 0 6.5 5.5"><path d="M0.5 0.3 L6 5.2 M6 0.3 L0.5 5.2" stroke="#9a9a9a" stroke-width="0.6"/></svg><div class="t k" style="left:189.50px;top:268.62px;font-size:6.4px;color:#000;transform:scaleX(0.8517);transform-origin:0 0;">Bestand</div><div class="t k" style="left:218.80px;top:268.62px;font-size:6.4px;color:#000;transform:scaleX(0.8785);transform-origin:0 0;">Bewerken</div><div class="t k" style="left:253.00px;top:268.62px;font-size:6.4px;color:#000;transform:scaleX(0.8476);transform-origin:0 0;">Opmaak</div><div class="t k" style="left:283.40px;top:268.62px;font-size:6.4px;color:#000;transform:scaleX(0.8553);transform-origin:0 0;">Beeld</div><div class="t k" style="left:305.50px;top:268.62px;font-size:6.4px;color:#000;transform:scaleX(0.8737);transform-origin:0 0;">Help</div><div class="a" style="left:186.00px;top:275.00px;width:361.00px;height:0.60px;background:#f0f0f0;"></div><div class="t m" style="left:187.80px;top:278.70px;font-size:7.5px;color:#000;transform:scaleX(0.9267);transform-origin:0 0;">fsutil wim enumwims R:  gives:</div><div class="t m" style="left:187.80px;top:297.30px;font-size:7.5px;color:#000;transform:scaleX(0.9267);transform-origin:0 0;">VHD File  Q:\W10x64_NL_3.vhd  Mounted as drive R:  is connected to WIM File:</div><div class="t m" style="left:187.80px;top:315.90px;font-size:7.5px;color:#000;transform:scaleX(0.9267);transform-origin:0 0;">   0 {819CE4FD-30A7-9816-8B99-E9C46207A274} 00000001 Q:\Wimboot\W10x64_NL_3.wim:1</div><div class="t m" style="left:187.80px;top:325.20px;font-size:7.5px;color:#000;transform:scaleX(0.9267);transform-origin:0 0;">Wim State:      SUSPENDED</div><div class="t m" style="left:187.80px;top:343.80px;font-size:7.5px;color:#000;transform:scaleX(0.9267);transform-origin:0 0;">Objects enumerated: 1</div><div class="a" style="left:538.80px;top:275.60px;width:8.20px;height:111.40px;background:#f0f0f0;"></div><svg class="a" style="left:540.00px;top:278.50px;" width="6" height="4" viewBox="0 0 6 4"><path d="M0.8 3 L3 1 L5.2 3" stroke="#a0a0a0" stroke-width="0.7" fill="none"/></svg><svg class="a" style="left:540.00px;top:380.50px;" width="6" height="4" viewBox="0 0 6 4"><path d="M0.8 1 L3 3 L5.2 1" stroke="#a0a0a0" stroke-width="0.7" fill="none"/></svg><div class="a" style="left:186.00px;top:387.00px;width:361.00px;height:8.50px;background:#f0f0f0;"></div><svg class="a" style="left:188.50px;top:388.50px;" width="4" height="6" viewBox="0 0 4 6"><path d="M3 0.8 L1 3 L3 5.2" stroke="#a0a0a0" stroke-width="0.7" fill="none"/></svg><svg class="a" style="left:530.00px;top:388.50px;" width="4" height="6" viewBox="0 0 4 6"><path d="M1 0.8 L3 3 L1 5.2" stroke="#a0a0a0" stroke-width="0.7" fill="none"/></svg><div class="a" style="left:186.00px;top:395.50px;width:361.00px;height:12.50px;background:#f0f0f0;border-top:0.6px solid #e2e2e2;box-sizing:border-box;"></div><div class="a" style="left:322.60px;top:396.00px;width:0.60px;height:12.00px;background:#d9d9d9;"></div><div class="a" style="left:394.80px;top:396.00px;width:0.60px;height:12.00px;background:#d9d9d9;"></div><div class="a" style="left:420.70px;top:396.00px;width:0.60px;height:12.00px;background:#d9d9d9;"></div><div class="a" style="left:484.00px;top:396.00px;width:0.60px;height:12.00px;background:#d9d9d9;"></div><div class="t k" style="left:327.50px;top:399.72px;font-size:6.4px;color:#000;transform:scaleX(0.9370);transform-origin:0 0;">Ln 1, Col 1</div><div class="t k" style="left:399.80px;top:399.72px;font-size:6.4px;color:#000;transform:scaleX(0.8553);transform-origin:0 0;">100%</div><div class="t k" style="left:425.00px;top:399.72px;font-size:6.4px;color:#000;transform:scaleX(0.8622);transform-origin:0 0;">Windows (CRLF)</div><div class="t k" style="left:488.00px;top:399.72px;font-size:6.4px;color:#000;transform:scaleX(0.8825);transform-origin:0 0;">UTF-8</div><svg class="a" style="left:541.00px;top:402.00px;" width="5" height="5" viewBox="0 0 5 5"><g fill="#b0b0b0"><rect x="3.5" y="0.5" width="1" height="1"/><rect x="2" y="2" width="1" height="1"/><rect x="3.5" y="2" width="1" height="1"/><rect x="0.5" y="3.5" width="1" height="1"/><rect x="2" y="3.5" width="1" height="1"/><rect x="3.5" y="3.5" width="1" height="1"/></g></svg><div class="a" style="left:545.00px;top:5.00px;width:446.00px;height:146.00px;background:rgba(0,0,0,.12);filter:blur(2.5px);"></div><div class="a" style="left:548.00px;top:6.00px;width:439.00px;height:140.00px;background:#fff;box-shadow:0 0 0 0.5px rgba(60,60,60,.35);"></div><svg class="a" style="left:552.20px;top:11.50px;overflow:visible;" width="8" height="5" viewBox="0 0 8 5"><path d="M0.9 2.4 Q1.3 0.8 2.6 0.8 L5.4 0.8 Q6.7 0.8 7.1 2.4Z" fill="#cdcdcd"/><rect x="0.5" y="2.3" width="7" height="2.3" rx="0.5" fill="#404040"/><rect x="5.9" y="3.0" width="1.1" height="0.9" fill="#35c435"/></svg><div class="a" style="left:563.80px;top:10.00px;width:0.60px;height:5.90px;background:#c8c8c8;"></div><svg class="a" style="left:569.50px;top:8.80px;" width="7" height="9" viewBox="0 0 7 9"><path d="M0.5 0.5 L4.5 0.5 L6.5 2.5 L6.5 8.5 L0.5 8.5Z" fill="#fff" stroke="#a8a8a8" stroke-width="0.5"/><path d="M1.6 4.8 L3 6.3 L5.6 3.2" stroke="#e8632b" stroke-width="0.8" fill="none"/></svg><svg class="a" style="left:581.50px;top:8.90px;" width="7" height="9" viewBox="0 0 7 9"><rect x="0.2" y="0.2" width="6.6" height="8.5" fill="#f3cf68"/><rect x="0.8" y="0.8" width="5.4" height="7.3" fill="#fbe18e"/><path d="M5.4 5.8 L6.8 6.6 L6.8 8.7 L5.4 8.7Z" fill="#eec35a"/></svg><svg class="a" style="left:592.30px;top:11.50px;" width="4.5" height="4.5" viewBox="0 0 4.5 4.5"><rect x="0.2" y="0" width="4" height="0.6" fill="#222"/><path d="M0.4 1.6 L4 1.6 L2.2 3.8Z" fill="#222"/></svg><div class="a" style="left:600.10px;top:10.00px;width:0.60px;height:5.90px;background:#c8c8c8;"></div><div class="a" style="left:666.30px;top:7.50px;width:99.00px;height:13.70px;background:#c3efa6;"></div><div class="t k" style="left:705.30px;top:12.37px;font-size:6.4px;color:#333;transform:scaleX(0.8679);transform-origin:0 0;">Beheren</div><div class="t k" style="left:772.70px;top:11.02px;font-size:6.4px;color:#999;transform:scaleX(0.8625);transform-origin:0 0;">SSD_W10 (D:)</div><div class="a" style="left:924.20px;top:12.50px;width:5.60px;height:0.60px;background:#9a9a9a;"></div><div class="a" style="left:948.00px;top:10.30px;width:5.60px;height:5.00px;border:0.6px solid #9a9a9a;box-sizing:border-box;"></div><svg class="a" style="left:971.80px;top:9.80px;" width="6" height="6" viewBox="0 0 6 6"><path d="M0.3 0.3 L5.7 5.7 M5.7 0.3 L0.3 5.7" stroke="#9a9a9a" stroke-width="0.6"/></svg><div class="a" style="left:548.00px;top:21.30px;width:29.00px;height:12.00px;background:#1a6fc1;"></div><div class="t k" style="left:552.25px;top:25.22px;font-size:6.4px;color:#fff;transform:scaleX(0.8730);transform-origin:0 0;">Bestand</div><div class="t k" style="left:584.40px;top:25.22px;font-size:6.4px;color:#222;transform:scaleX(0.8879);transform-origin:0 0;">Start</div><div class="t k" style="left:612.20px;top:25.22px;font-size:6.4px;color:#222;transform:scaleX(0.8851);transform-origin:0 0;">Delen</div><div class="t k" style="left:643.00px;top:25.22px;font-size:6.4px;color:#222;transform:scaleX(0.8553);transform-origin:0 0;">Beeld</div><div class="t k" style="left:673.75px;top:25.22px;font-size:6.4px;color:#222;transform:scaleX(0.9563);transform-origin:0 0;">Hulpprogramma&#x27;s voor stations</div><div class="a" style="left:666.30px;top:21.30px;width:0.60px;height:12.00px;background:#dcdcdc;"></div><div class="a" style="left:765.30px;top:21.30px;width:0.60px;height:12.00px;background:#dcdcdc;"></div><div class="a" style="left:548.00px;top:33.30px;width:439.00px;height:0.60px;background:#e2e3e4;"></div><svg class="a" style="left:967.40px;top:26.00px;" width="4.2" height="2.6" viewBox="0 0 4.2 2.6"><path d="M0.5 0.5 L2.1 2.1 L3.7 0.5" stroke="#777" stroke-width="0.6" fill="none"/></svg><svg class="a" style="left:976.50px;top:24.00px;" width="7" height="7" viewBox="0 0 7 7"><circle cx="3.5" cy="3.5" r="3.3" fill="#1a73d9"/><text x="3.5" y="5.5" font-family="Liberation Sans" font-size="5.2" font-weight="bold" fill="#fff" text-anchor="middle">?</text></svg><svg class="a" style="left:554.00px;top:39.70px;" width="8" height="6" viewBox="0 0 8 6"><path d="M7.5 3 L1 3 M3.8 0.3 L1 3 L3.8 5.7" stroke="#8a8a8a" stroke-width="0.8" fill="none"/></svg><svg class="a" style="left:569.00px;top:39.70px;" width="8" height="6" viewBox="0 0 8 6"><path d="M0.5 3 L7 3 M4.2 0.3 L7 3 L4.2 5.7" stroke="#cfcfcf" stroke-width="0.7" fill="none"/></svg><svg class="a" style="left:583.80px;top:41.60px;" width="3.4" height="2.2" viewBox="0 0 3.4 2.2"><path d="M0.5 0.5 L1.7 1.7 L2.9 0.5" stroke="#8a8a8a" stroke-width="0.6" fill="none"/></svg><svg class="a" style="left:593.00px;top:39.20px;" width="6" height="7" viewBox="0 0 6 7"><path d="M3 7 L3 1 M0.4 3.6 L3 1 L5.6 3.6" stroke="#4a4a4a" stroke-width="1.1" fill="none"/></svg><div class="a" style="left:603.60px;top:36.90px;width:265.90px;height:11.60px;border:0.6px solid #d9d9d9;box-sizing:border-box;background:#fff;"></div><svg class="a" style="left:604.50px;top:41.70px;overflow:visible;" width="8" height="5" viewBox="0 0 8 5"><path d="M0.9 2.4 Q1.3 0.8 2.6 0.8 L5.4 0.8 Q6.7 0.8 7.1 2.4Z" fill="#cdcdcd"/><rect x="0.5" y="2.3" width="7" height="2.3" rx="0.5" fill="#404040"/><rect x="5.9" y="3.0" width="1.1" height="0.9" fill="#35c435"/></svg><svg class="a" style="left:616.40px;top:41.00px;" width="2.2" height="3.4" viewBox="0 0 2.2 3.4"><path d="M0.5 0.5 L1.7 1.7 L0.5 2.9" stroke="#333" stroke-width="0.85" fill="none"/></svg><div class="t k" style="left:623.70px;top:40.62px;font-size:6.4px;color:#111;transform:scaleX(0.9073);transform-origin:0 0;">Deze pc</div><svg class="a" style="left:649.90px;top:41.00px;" width="2.2" height="3.4" viewBox="0 0 2.2 3.4"><path d="M0.5 0.5 L1.7 1.7 L0.5 2.9" stroke="#333" stroke-width="0.85" fill="none"/></svg><div class="t k" style="left:657.00px;top:40.62px;font-size:6.4px;color:#111;transform:scaleX(0.8743);transform-origin:0 0;">SSD_W10 (D:)</div><svg class="a" style="left:698.60px;top:41.00px;" width="2.2" height="3.4" viewBox="0 0 2.2 3.4"><path d="M0.5 0.5 L1.7 1.7 L0.5 2.9" stroke="#333" stroke-width="0.85" fill="none"/></svg><svg class="a" style="left:853.60px;top:41.55px;" width="4.8" height="2.9" viewBox="0 0 4.8 2.9"><path d="M0.5 0.5 L2.4 2.4 L4.3 0.5" stroke="#333" stroke-width="1.0" fill="none"/></svg><div class="a" style="left:860.30px;top:37.50px;width:0.50px;height:10.40px;background:#e3e3e3;"></div><svg class="a" style="left:862.00px;top:39.50px;" width="6" height="6.5" viewBox="0 0 6 6.5"><path d="M4.9 2.4 A2.4 2.4 0 1 1 3.0 1.0" stroke="#555" stroke-width="0.95" fill="none"/><path d="M2.3 -0.1 L3.9 1.1 L2.4 2.3" stroke="#555" stroke-width="0.8" fill="none"/></svg><div class="a" style="left:875.90px;top:36.90px;width:104.80px;height:11.60px;border:0.6px solid #d9d9d9;box-sizing:border-box;background:#fff;"></div><div class="t k" style="left:880.20px;top:40.62px;font-size:6.4px;color:#6d6d6d;transform:scaleX(0.9003);transform-origin:0 0;">Zoeken in SSD_W10 (D:)</div><svg class="a" style="left:970.70px;top:39.40px;" width="7" height="7" viewBox="0 0 7 7"><circle cx="4.2" cy="2.8" r="2.1" stroke="#333" stroke-width="0.7" fill="none"/><path d="M2.7 4.3 L0.6 6.4" stroke="#333" stroke-width="0.9"/></svg><div class="a" style="left:548.00px;top:77.30px;width:114.00px;height:12.60px;background:#d9d9d9;"></div><svg class="a" style="left:565.50px;top:54.10px;" width="7" height="8" viewBox="0 0 7 8"><rect x="0" y="0" width="7" height="8" fill="#303030"/><rect x="1.4" y="1" width="4.2" height="6" fill="#2f6fd1"/><rect x="1.4" y="4" width="4.2" height="3" fill="#6a4cc4"/><g fill="#bbb"><rect x="0.3" y="0.8" width="0.7" height="0.8"/><rect x="0.3" y="3.5" width="0.7" height="0.8"/><rect x="0.3" y="6.2" width="0.7" height="0.8"/><rect x="6" y="0.8" width="0.7" height="0.8"/><rect x="6" y="3.5" width="0.7" height="0.8"/><rect x="6" y="6.2" width="0.7" height="0.8"/></g></svg><div class="t k" style="left:575.00px;top:55.82px;font-size:6.4px;color:#111;transform:scaleX(1.0013);transform-origin:0 0;">Video&#x27;s</div><svg class="a" style="left:565.00px;top:69.70px;overflow:visible;" width="8" height="5" viewBox="0 0 8 5"><g fill="#35b6f2"><rect x="0.5" y="-2.6" width="1.4" height="1.2"/><rect x="2.1" y="-2.6" width="1.4" height="1.2"/><rect x="0.5" y="-1.2" width="1.4" height="1.2"/><rect x="2.1" y="-1.2" width="1.4" height="1.2"/></g><path d="M0.9 2.4 Q1.3 0.8 2.6 0.8 L5.4 0.8 Q6.7 0.8 7.1 2.4Z" fill="#cdcdcd"/><rect x="0.5" y="2.3" width="7" height="2.3" rx="0.5" fill="#404040"/><rect x="5.9" y="3.0" width="1.1" height="0.9" fill="#35c435"/></svg><div class="t k" style="left:575.00px;top:68.42px;font-size:6.4px;color:#111;transform:scaleX(0.9233);transform-origin:0 0;">W10x64_NL_2.vhdx (C:)</div><svg class="a" style="left:565.00px;top:82.20px;overflow:visible;" width="8" height="5" viewBox="0 0 8 5"><path d="M0.9 2.4 Q1.3 0.8 2.6 0.8 L5.4 0.8 Q6.7 0.8 7.1 2.4Z" fill="#cdcdcd"/><rect x="0.5" y="2.3" width="7" height="2.3" rx="0.5" fill="#404040"/><rect x="5.9" y="3.0" width="1.1" height="0.9" fill="#35c435"/></svg><div class="t k" style="left:575.00px;top:80.92px;font-size:6.4px;color:#111;transform:scaleX(0.8791);transform-origin:0 0;">SSD_W10 (D:)</div><svg class="a" style="left:565.00px;top:94.50px;overflow:visible;" width="8" height="5" viewBox="0 0 8 5"><path d="M0.9 2.4 Q1.3 0.8 2.6 0.8 L5.4 0.8 Q6.7 0.8 7.1 2.4Z" fill="#cdcdcd"/><rect x="0.5" y="2.3" width="7" height="2.3" rx="0.5" fill="#404040"/><rect x="5.9" y="3.0" width="1.1" height="0.9" fill="#35c435"/></svg><div class="t k" style="left:575.00px;top:93.22px;font-size:6.4px;color:#111;transform:scaleX(0.8645);transform-origin:0 0;">SSD_LINUX (E:)</div><svg class="a" style="left:565.00px;top:107.00px;overflow:visible;" width="8" height="5" viewBox="0 0 8 5"><path d="M0.9 2.4 Q1.3 0.8 2.6 0.8 L5.4 0.8 Q6.7 0.8 7.1 2.4Z" fill="#cdcdcd"/><rect x="0.5" y="2.3" width="7" height="2.3" rx="0.5" fill="#404040"/><rect x="5.9" y="3.0" width="1.1" height="0.9" fill="#35c435"/></svg><div class="t k" style="left:575.00px;top:105.72px;font-size:6.4px;color:#111;transform:scaleX(0.8871);transform-origin:0 0;">1_BOOT (F:)</div><svg class="a" style="left:565.00px;top:119.50px;overflow:visible;" width="8" height="5" viewBox="0 0 8 5"><path d="M0.9 2.4 Q1.3 0.8 2.6 0.8 L5.4 0.8 Q6.7 0.8 7.1 2.4Z" fill="#cdcdcd"/><rect x="0.5" y="2.3" width="7" height="2.3" rx="0.5" fill="#404040"/><rect x="5.9" y="3.0" width="1.1" height="0.9" fill="#35c435"/></svg><div class="t k" style="left:575.00px;top:118.22px;font-size:6.4px;color:#111;transform:scaleX(0.8692);transform-origin:0 0;">2_WERK (G:)</div><svg class="a" style="left:565.00px;top:131.50px;overflow:visible;" width="8" height="5" viewBox="0 0 8 5"><path d="M0.9 2.4 Q1.3 0.8 2.6 0.8 L5.4 0.8 Q6.7 0.8 7.1 2.4Z" fill="#cdcdcd"/><rect x="0.5" y="2.3" width="7" height="2.3" rx="0.5" fill="#404040"/><rect x="5.9" y="3.0" width="1.1" height="0.9" fill="#35c435"/></svg><div class="t k" style="left:575.00px;top:130.22px;font-size:6.4px;color:#111;transform:scaleX(0.8796);transform-origin:0 0;">0_M2_BOOT (H:)</div><div class="a" style="left:548.00px;top:133.50px;width:114.00px;height:3.50px;background:#fff;"></div><div class="a" style="left:662.00px;top:51.60px;width:7.50px;height:81.90px;background:#f0f0f0;"></div><svg class="a" style="left:663.35px;top:55.15px;" width="4.8" height="2.9" viewBox="0 0 4.8 2.9"><path d="M0.5 2.4 L2.4 0.5 L4.3 2.4" stroke="#505050" stroke-width="1.0" fill="none"/></svg><svg class="a" style="left:663.35px;top:127.55px;" width="4.8" height="2.9" viewBox="0 0 4.8 2.9"><path d="M0.5 0.5 L2.4 2.4 L4.3 0.5" stroke="#505050" stroke-width="1.0" fill="none"/></svg><div class="a" style="left:662.80px;top:84.00px;width:5.90px;height:9.30px;background:#cdcdcd;"></div><div class="t k" style="left:681.00px;top:56.42px;font-size:6.4px;color:#4c607a;transform:scaleX(0.9080);transform-origin:0 0;">Naam</div><svg class="a" style="left:726.40px;top:52.10px;" width="4.2" height="2.6" viewBox="0 0 4.2 2.6"><path d="M0.5 2.1 L2.1 0.5 L3.7 2.1" stroke="#8a8a8a" stroke-width="0.6" fill="none"/></svg><div class="a" style="left:778.00px;top:52.40px;width:0.60px;height:12.30px;background:#ebebeb;"></div><div class="t k" style="left:782.50px;top:56.42px;font-size:6.4px;color:#4c607a;transform:scaleX(0.9553);transform-origin:0 0;">Gewijzigd op</div><div class="a" style="left:853.50px;top:52.40px;width:0.60px;height:12.30px;background:#ebebeb;"></div><div class="t k" style="left:857.50px;top:56.42px;font-size:6.4px;color:#4c607a;transform:scaleX(0.9010);transform-origin:0 0;">Type</div><div class="a" style="left:916.00px;top:52.40px;width:0.60px;height:12.30px;background:#ebebeb;"></div><div class="t k" style="left:919.90px;top:56.42px;font-size:6.4px;color:#4c607a;transform:scaleX(0.9746);transform-origin:0 0;">Grootte</div><div class="a" style="left:960.00px;top:52.40px;width:0.60px;height:12.30px;background:#ebebeb;"></div><svg class="a" style="left:682.50px;top:69.60px;" width="8" height="9" viewBox="0 0 8 9"><rect x="0.2" y="0.2" width="6.6" height="8.3" fill="#f3cf68"/><rect x="0.8" y="0.8" width="5.4" height="7.1" fill="#fbe18e"/><path d="M5.4 5.8 L6.8 6.6 L6.8 8.5 L5.4 8.5Z" fill="#eec35a"/></svg><div class="t k" style="left:691.70px;top:71.62px;font-size:6.4px;color:#111;transform:scaleX(1.0297);transform-origin:0 0;">Wimboot</div><div class="t k" style="left:782.50px;top:71.62px;font-size:6.4px;color:#6d6d6d;transform:scaleX(0.9005);transform-origin:0 0;">28-06-2019 09:26</div><div class="t k" style="left:857.50px;top:71.62px;font-size:6.4px;color:#6d6d6d;transform:scaleX(0.9327);transform-origin:0 0;">Bestandsmap</div><svg class="a" style="left:681.80px;top:84.30px;overflow:visible;" width="8" height="5" viewBox="0 0 8 5"><path d="M0.9 2.4 Q1.3 0.8 2.6 0.8 L5.4 0.8 Q6.7 0.8 7.1 2.4Z" fill="#cdcdcd"/><rect x="0.5" y="2.3" width="7" height="2.3" rx="0.5" fill="#404040"/><rect x="5.9" y="3.0" width="1.1" height="0.9" fill="#35c435"/></svg><div class="t k" style="left:691.70px;top:83.02px;font-size:6.4px;color:#111;transform:scaleX(0.9110);transform-origin:0 0;">W10x64_NL_0.vhdx</div><div class="t k" style="left:782.50px;top:83.02px;font-size:6.4px;color:#6d6d6d;transform:scaleX(0.9091);transform-origin:0 0;">11-07-2019 16:19</div><div class="t k" style="left:857.50px;top:83.02px;font-size:6.4px;color:#6d6d6d;transform:scaleX(0.9822);transform-origin:0 0;">Hardeschijfkopieb...</div><div class="t k" style="left:922.80px;top:83.02px;font-size:6.4px;color:#6d6d6d;transform:scaleX(0.8803);transform-origin:0 0;">8.523.776 kB</div><svg class="a" style="left:681.80px;top:95.00px;overflow:visible;" width="8" height="5" viewBox="0 0 8 5"><path d="M0.9 2.4 Q1.3 0.8 2.6 0.8 L5.4 0.8 Q6.7 0.8 7.1 2.4Z" fill="#cdcdcd"/><rect x="0.5" y="2.3" width="7" height="2.3" rx="0.5" fill="#404040"/><rect x="5.9" y="3.0" width="1.1" height="0.9" fill="#35c435"/></svg><div class="t k" style="left:691.70px;top:93.72px;font-size:6.4px;color:#111;transform:scaleX(0.9110);transform-origin:0 0;">W10x64_NL_1.vhdx</div><div class="t k" style="left:782.50px;top:93.72px;font-size:6.4px;color:#6d6d6d;transform:scaleX(0.9005);transform-origin:0 0;">29-06-2019 07:47</div><div class="t k" style="left:857.50px;top:93.72px;font-size:6.4px;color:#6d6d6d;transform:scaleX(0.9822);transform-origin:0 0;">Hardeschijfkopieb...</div><div class="t k" style="left:922.80px;top:93.72px;font-size:6.4px;color:#6d6d6d;transform:scaleX(0.8803);transform-origin:0 0;">2.854.912 kB</div><svg class="a" style="left:681.80px;top:105.70px;overflow:visible;" width="8" height="5" viewBox="0 0 8 5"><path d="M0.9 2.4 Q1.3 0.8 2.6 0.8 L5.4 0.8 Q6.7 0.8 7.1 2.4Z" fill="#cdcdcd"/><rect x="0.5" y="2.3" width="7" height="2.3" rx="0.5" fill="#404040"/><rect x="5.9" y="3.0" width="1.1" height="0.9" fill="#35c435"/></svg><div class="t k" style="left:691.70px;top:104.42px;font-size:6.4px;color:#111;transform:scaleX(0.9110);transform-origin:0 0;">W10x64_NL_2.vhdx</div><div class="t k" style="left:782.50px;top:104.42px;font-size:6.4px;color:#6d6d6d;transform:scaleX(0.9005);transform-origin:0 0;">14-07-2019 18:43</div><div class="t k" style="left:857.50px;top:104.42px;font-size:6.4px;color:#6d6d6d;transform:scaleX(0.9822);transform-origin:0 0;">Hardeschijfkopieb...</div><div class="t k" style="left:920.00px;top:104.42px;font-size:6.4px;color:#6d6d6d;transform:scaleX(0.8722);transform-origin:0 0;">25.628.672 kB</div><div class="t k" style="left:555.00px;top:137.72px;font-size:6.4px;color:#333;transform:scaleX(0.9696);transform-origin:0 0;">4 items</div><div class="a" style="left:585.00px;top:136.00px;width:0.60px;height:8.00px;background:#f0f0f0;"></div><div class="a" style="left:961.50px;top:134.10px;width:11.50px;height:12.00px;background:#cce8ff;border:0.9px solid #7cc0ea;box-sizing:border-box;"></div><svg class="a" style="left:963.70px;top:137.00px;" width="8" height="7" viewBox="0 0 8 7"><rect x="0.2" y="0.2" width="1.6" height="1.6" fill="#e8e0d0"/><rect x="0.2" y="2.6" width="1.6" height="1.6" fill="#dfe8ff"/><rect x="0.2" y="5" width="1.6" height="1.6" fill="#f2b8b0"/><g stroke="#555" stroke-width="0.6"><path d="M2.8 1 L4.8 1 M5.6 1 L7.6 1 M2.8 3.4 L4.8 3.4 M5.6 3.4 L7.6 3.4 M2.8 5.8 L4.8 5.8 M5.6 5.8 L7.6 5.8"/></g></svg><svg class="a" style="left:975.00px;top:137.20px;" width="8" height="6.5" viewBox="0 0 8 6.5"><rect x="0.3" y="0.3" width="7.4" height="5.9" fill="#e6e6e6" stroke="#b8b8b8" stroke-width="0.5"/><rect x="1.2" y="1.2" width="5.6" height="4.1" fill="#9cc6ea"/><path d="M1.2 5.3 L3 3 L4.8 4.4 L6.8 3.4 L6.8 5.3Z" fill="#4f6f3f"/></svg><div class="a" style="left:546.00px;top:150.00px;width:444.00px;height:127.00px;background:rgba(0,0,0,.12);filter:blur(2.5px);"></div><div class="a" style="left:549.00px;top:151.00px;width:437.00px;height:121.00px;background:#fff;box-shadow:0 0 0 0.5px rgba(60,60,60,.35);"></div><svg class="a" style="left:554.20px;top:153.90px;" width="8" height="9" viewBox="0 0 8 9"><rect x="0.2" y="0.2" width="6.6" height="8.3" fill="#f3cf68"/><rect x="0.8" y="0.8" width="5.4" height="7.1" fill="#fbe18e"/><path d="M5.4 5.8 L6.8 6.6 L6.8 8.5 L5.4 8.5Z" fill="#eec35a"/></svg><div class="t k" style="left:563.70px;top:155.92px;font-size:6.4px;color:#999;transform:scaleX(1.0416);transform-origin:0 0;">Wimboot</div><div class="a" style="left:923.60px;top:157.90px;width:5.60px;height:0.60px;background:#9a9a9a;"></div><div class="a" style="left:947.10px;top:155.70px;width:5.60px;height:5.00px;border:0.6px solid #9a9a9a;box-sizing:border-box;"></div><svg class="a" style="left:970.80px;top:155.20px;" width="6" height="6" viewBox="0 0 6 6"><path d="M0.3 0.3 L5.7 5.7 M5.7 0.3 L0.3 5.7" stroke="#9a9a9a" stroke-width="0.6"/></svg><svg class="a" style="left:555.00px;top:172.00px;" width="8" height="6" viewBox="0 0 8 6"><path d="M7.5 3 L1 3 M3.8 0.3 L1 3 L3.8 5.7" stroke="#c4c4c4" stroke-width="0.8" fill="none"/></svg><svg class="a" style="left:570.00px;top:172.00px;" width="8" height="6" viewBox="0 0 8 6"><path d="M0.5 3 L7 3 M4.2 0.3 L7 3 L4.2 5.7" stroke="#cfcfcf" stroke-width="0.7" fill="none"/></svg><svg class="a" style="left:584.80px;top:173.90px;" width="3.4" height="2.2" viewBox="0 0 3.4 2.2"><path d="M0.5 0.5 L1.7 1.7 L2.9 0.5" stroke="#8a8a8a" stroke-width="0.6" fill="none"/></svg><svg class="a" style="left:594.00px;top:171.50px;" width="6" height="7" viewBox="0 0 6 7"><path d="M3 7 L3 1 M0.4 3.6 L3 1 L5.6 3.6" stroke="#4a4a4a" stroke-width="1.1" fill="none"/></svg><div class="a" style="left:605.00px;top:169.20px;width:262.80px;height:11.60px;border:0.6px solid #d9d9d9;box-sizing:border-box;background:#fff;"></div><svg class="a" style="left:606.80px;top:170.70px;" width="8" height="9" viewBox="0 0 8 9"><rect x="0.2" y="0.2" width="6.6" height="8.3" fill="#f3cf68"/><rect x="0.8" y="0.8" width="5.4" height="7.1" fill="#fbe18e"/><path d="M5.4 5.8 L6.8 6.6 L6.8 8.5 L5.4 8.5Z" fill="#eec35a"/></svg><svg class="a" style="left:618.70px;top:173.30px;" width="2.2" height="3.4" viewBox="0 0 2.2 3.4"><path d="M0.5 0.5 L1.7 1.7 L0.5 2.9" stroke="#333" stroke-width="0.85" fill="none"/></svg><div class="t k" style="left:625.30px;top:172.92px;font-size:6.4px;color:#111;transform:scaleX(0.9200);transform-origin:0 0;">Deze pc</div><svg class="a" style="left:652.30px;top:173.30px;" width="2.2" height="3.4" viewBox="0 0 2.2 3.4"><path d="M0.5 0.5 L1.7 1.7 L0.5 2.9" stroke="#333" stroke-width="0.85" fill="none"/></svg><div class="t k" style="left:658.40px;top:172.92px;font-size:6.4px;color:#111;transform:scaleX(0.8625);transform-origin:0 0;">SSD_W10 (D:)</div><svg class="a" style="left:700.30px;top:173.30px;" width="2.2" height="3.4" viewBox="0 0 2.2 3.4"><path d="M0.5 0.5 L1.7 1.7 L0.5 2.9" stroke="#333" stroke-width="0.85" fill="none"/></svg><div class="t k" style="left:707.10px;top:172.92px;font-size:6.4px;color:#111;transform:scaleX(1.0297);transform-origin:0 0;">Wimboot</div><svg class="a" style="left:851.90px;top:173.85px;" width="4.8" height="2.9" viewBox="0 0 4.8 2.9"><path d="M0.5 0.5 L2.4 2.4 L4.3 0.5" stroke="#333" stroke-width="1.0" fill="none"/></svg><div class="a" style="left:858.60px;top:169.80px;width:0.50px;height:10.40px;background:#e3e3e3;"></div><svg class="a" style="left:860.30px;top:171.80px;" width="6" height="6.5" viewBox="0 0 6 6.5"><path d="M4.9 2.4 A2.4 2.4 0 1 1 3.0 1.0" stroke="#555" stroke-width="0.95" fill="none"/><path d="M2.3 -0.1 L3.9 1.1 L2.4 2.3" stroke="#555" stroke-width="0.8" fill="none"/></svg><div class="a" style="left:874.30px;top:169.20px;width:105.10px;height:11.60px;border:0.6px solid #d9d9d9;box-sizing:border-box;background:#fff;"></div><div class="t k" style="left:878.60px;top:172.92px;font-size:6.4px;color:#6d6d6d;transform:scaleX(0.9940);transform-origin:0 0;">Zoeken in Wimboot</div><svg class="a" style="left:969.40px;top:171.70px;" width="7" height="7" viewBox="0 0 7 7"><circle cx="4.2" cy="2.8" r="2.1" stroke="#333" stroke-width="0.7" fill="none"/><path d="M2.7 4.3 L0.6 6.4" stroke="#333" stroke-width="0.9"/></svg><div class="a" style="left:549.00px;top:209.70px;width:114.00px;height:12.50px;background:#d9d9d9;"></div><svg class="a" style="left:566.70px;top:186.60px;" width="7" height="8" viewBox="0 0 7 8"><rect x="0" y="0" width="7" height="8" fill="#303030"/><rect x="1.4" y="1" width="4.2" height="6" fill="#2f6fd1"/><rect x="1.4" y="4" width="4.2" height="3" fill="#6a4cc4"/><g fill="#bbb"><rect x="0.3" y="0.8" width="0.7" height="0.8"/><rect x="0.3" y="3.5" width="0.7" height="0.8"/><rect x="0.3" y="6.2" width="0.7" height="0.8"/><rect x="6" y="0.8" width="0.7" height="0.8"/><rect x="6" y="3.5" width="0.7" height="0.8"/><rect x="6" y="6.2" width="0.7" height="0.8"/></g></svg><div class="t k" style="left:576.90px;top:188.32px;font-size:6.4px;color:#111;transform:scaleX(1.0013);transform-origin:0 0;">Video&#x27;s</div><svg class="a" style="left:566.20px;top:202.30px;overflow:visible;" width="8" height="5" viewBox="0 0 8 5"><g fill="#35b6f2"><rect x="0.5" y="-2.6" width="1.4" height="1.2"/><rect x="2.1" y="-2.6" width="1.4" height="1.2"/><rect x="0.5" y="-1.2" width="1.4" height="1.2"/><rect x="2.1" y="-1.2" width="1.4" height="1.2"/></g><path d="M0.9 2.4 Q1.3 0.8 2.6 0.8 L5.4 0.8 Q6.7 0.8 7.1 2.4Z" fill="#cdcdcd"/><rect x="0.5" y="2.3" width="7" height="2.3" rx="0.5" fill="#404040"/><rect x="5.9" y="3.0" width="1.1" height="0.9" fill="#35c435"/></svg><div class="t k" style="left:576.90px;top:201.02px;font-size:6.4px;color:#111;transform:scaleX(0.9233);transform-origin:0 0;">W10x64_NL_2.vhdx (C:)</div><svg class="a" style="left:566.20px;top:214.70px;overflow:visible;" width="8" height="5" viewBox="0 0 8 5"><path d="M0.9 2.4 Q1.3 0.8 2.6 0.8 L5.4 0.8 Q6.7 0.8 7.1 2.4Z" fill="#cdcdcd"/><rect x="0.5" y="2.3" width="7" height="2.3" rx="0.5" fill="#404040"/><rect x="5.9" y="3.0" width="1.1" height="0.9" fill="#35c435"/></svg><div class="t k" style="left:576.90px;top:213.42px;font-size:6.4px;color:#111;transform:scaleX(0.8791);transform-origin:0 0;">SSD_W10 (D:)</div><svg class="a" style="left:566.20px;top:227.20px;overflow:visible;" width="8" height="5" viewBox="0 0 8 5"><path d="M0.9 2.4 Q1.3 0.8 2.6 0.8 L5.4 0.8 Q6.7 0.8 7.1 2.4Z" fill="#cdcdcd"/><rect x="0.5" y="2.3" width="7" height="2.3" rx="0.5" fill="#404040"/><rect x="5.9" y="3.0" width="1.1" height="0.9" fill="#35c435"/></svg><div class="t k" style="left:576.90px;top:225.92px;font-size:6.4px;color:#111;transform:scaleX(0.8645);transform-origin:0 0;">SSD_LINUX (E:)</div><svg class="a" style="left:566.20px;top:240.00px;overflow:visible;" width="8" height="5" viewBox="0 0 8 5"><path d="M0.9 2.4 Q1.3 0.8 2.6 0.8 L5.4 0.8 Q6.7 0.8 7.1 2.4Z" fill="#cdcdcd"/><rect x="0.5" y="2.3" width="7" height="2.3" rx="0.5" fill="#404040"/><rect x="5.9" y="3.0" width="1.1" height="0.9" fill="#35c435"/></svg><div class="t k" style="left:576.90px;top:238.72px;font-size:6.4px;color:#111;transform:scaleX(0.8871);transform-origin:0 0;">1_BOOT (F:)</div><svg class="a" style="left:566.20px;top:252.40px;overflow:visible;" width="8" height="5" viewBox="0 0 8 5"><path d="M0.9 2.4 Q1.3 0.8 2.6 0.8 L5.4 0.8 Q6.7 0.8 7.1 2.4Z" fill="#cdcdcd"/><rect x="0.5" y="2.3" width="7" height="2.3" rx="0.5" fill="#404040"/><rect x="5.9" y="3.0" width="1.1" height="0.9" fill="#35c435"/></svg><div class="t k" style="left:576.90px;top:251.12px;font-size:6.4px;color:#111;transform:scaleX(0.8692);transform-origin:0 0;">2_WERK (G:)</div><div class="a" style="left:663.20px;top:183.50px;width:7.70px;height:76.50px;background:#f0f0f0;"></div><svg class="a" style="left:664.65px;top:187.05px;" width="4.8" height="2.9" viewBox="0 0 4.8 2.9"><path d="M0.5 2.4 L2.4 0.5 L4.3 2.4" stroke="#505050" stroke-width="1.0" fill="none"/></svg><svg class="a" style="left:664.65px;top:254.05px;" width="4.8" height="2.9" viewBox="0 0 4.8 2.9"><path d="M0.5 0.5 L2.4 2.4 L4.3 0.5" stroke="#505050" stroke-width="1.0" fill="none"/></svg><div class="a" style="left:664.00px;top:214.00px;width:6.10px;height:9.00px;background:#cdcdcd;"></div><div class="t k" style="left:682.20px;top:188.72px;font-size:6.4px;color:#4c607a;transform:scaleX(0.9080);transform-origin:0 0;">Naam</div><svg class="a" style="left:726.40px;top:184.40px;" width="4.2" height="2.6" viewBox="0 0 4.2 2.6"><path d="M0.5 2.1 L2.1 0.5 L3.7 2.1" stroke="#8a8a8a" stroke-width="0.6" fill="none"/></svg><div class="a" style="left:778.90px;top:184.70px;width:0.60px;height:12.30px;background:#ebebeb;"></div><div class="t k" style="left:782.50px;top:188.72px;font-size:6.4px;color:#4c607a;transform:scaleX(0.9553);transform-origin:0 0;">Gewijzigd op</div><div class="a" style="left:854.00px;top:184.70px;width:0.60px;height:12.30px;background:#ebebeb;"></div><div class="t k" style="left:857.50px;top:188.72px;font-size:6.4px;color:#4c607a;transform:scaleX(0.9010);transform-origin:0 0;">Type</div><div class="a" style="left:916.30px;top:184.70px;width:0.60px;height:12.30px;background:#ebebeb;"></div><div class="t k" style="left:919.90px;top:188.72px;font-size:6.4px;color:#4c607a;transform:scaleX(0.9746);transform-origin:0 0;">Grootte</div><div class="a" style="left:958.00px;top:184.70px;width:0.60px;height:12.30px;background:#ebebeb;"></div><svg class="a" style="left:682.50px;top:202.00px;" width="9" height="8.5" viewBox="0 0 9 8.5"><path d="M0.4 2.8 L2 2.8 L2 7.9 L8.4 7.9 L8.4 6.3 L3.2 6.3 L3.2 2.8" fill="#f7eba6" stroke="#8c7b2e" stroke-width="0.5"/><rect x="0.4" y="2.8" width="8" height="5.1" fill="#f7eba6" stroke="#8c7b2e" stroke-width="0.5"/><rect x="3.4" y="0.3" width="5" height="5.6" fill="#4c5ef0"/><path d="M4.4 1.4 L7.4 4.8 M7.4 1.4 L4.4 4.8" stroke="#c8d0ff" stroke-width="0.5"/></svg><div class="t k" style="left:693.20px;top:203.92px;font-size:6.4px;color:#111;transform:scaleX(0.9469);transform-origin:0 0;">install_1903.wim</div><div class="t k" style="left:782.50px;top:203.92px;font-size:6.4px;color:#6d6d6d;transform:scaleX(0.9065);transform-origin:0 0;">02-04-2019 01:58</div><div class="t k" style="left:857.50px;top:203.92px;font-size:6.4px;color:#6d6d6d;transform:scaleX(1.0047);transform-origin:0 0;">wim Archive</div><div class="t k" style="left:920.60px;top:203.92px;font-size:6.4px;color:#6d6d6d;transform:scaleX(0.8909);transform-origin:0 0;">4.065.336 kB</div><svg class="a" style="left:682.50px;top:212.80px;" width="9" height="8.5" viewBox="0 0 9 8.5"><path d="M0.4 2.8 L2 2.8 L2 7.9 L8.4 7.9 L8.4 6.3 L3.2 6.3 L3.2 2.8" fill="#f7eba6" stroke="#8c7b2e" stroke-width="0.5"/><rect x="0.4" y="2.8" width="8" height="5.1" fill="#f7eba6" stroke="#8c7b2e" stroke-width="0.5"/><rect x="3.4" y="0.3" width="5" height="5.6" fill="#4c5ef0"/><path d="M4.4 1.4 L7.4 4.8 M7.4 1.4 L4.4 4.8" stroke="#c8d0ff" stroke-width="0.5"/></svg><div class="t k" style="left:693.20px;top:214.72px;font-size:6.4px;color:#111;transform:scaleX(0.9155);transform-origin:0 0;">W10x64_NL_1.wim</div><div class="t k" style="left:782.50px;top:214.72px;font-size:6.4px;color:#6d6d6d;transform:scaleX(0.9065);transform-origin:0 0;">26-06-2019 20:02</div><div class="t k" style="left:857.50px;top:214.72px;font-size:6.4px;color:#6d6d6d;transform:scaleX(1.0047);transform-origin:0 0;">wim Archive</div><div class="t k" style="left:920.60px;top:214.72px;font-size:6.4px;color:#6d6d6d;transform:scaleX(0.8909);transform-origin:0 0;">8.029.477 kB</div><svg class="a" style="left:682.50px;top:224.00px;" width="9" height="8.5" viewBox="0 0 9 8.5"><path d="M0.4 2.8 L2 2.8 L2 7.9 L8.4 7.9 L8.4 6.3 L3.2 6.3 L3.2 2.8" fill="#f7eba6" stroke="#8c7b2e" stroke-width="0.5"/><rect x="0.4" y="2.8" width="8" height="5.1" fill="#f7eba6" stroke="#8c7b2e" stroke-width="0.5"/><rect x="3.4" y="0.3" width="5" height="5.6" fill="#4c5ef0"/><path d="M4.4 1.4 L7.4 4.8 M7.4 1.4 L4.4 4.8" stroke="#c8d0ff" stroke-width="0.5"/></svg><div class="t k" style="left:693.20px;top:225.92px;font-size:6.4px;color:#111;transform:scaleX(0.9155);transform-origin:0 0;">W10x64_NL_2.wim</div><div class="t k" style="left:782.50px;top:225.92px;font-size:6.4px;color:#6d6d6d;transform:scaleX(0.9065);transform-origin:0 0;">28-06-2019 09:28</div><div class="t k" style="left:857.50px;top:225.92px;font-size:6.4px;color:#6d6d6d;transform:scaleX(1.0047);transform-origin:0 0;">wim Archive</div><div class="t k" style="left:920.60px;top:225.92px;font-size:6.4px;color:#6d6d6d;transform:scaleX(0.8909);transform-origin:0 0;">8.600.916 kB</div><div class="t k" style="left:556.50px;top:264.52px;font-size:6.4px;color:#333;transform:scaleX(0.9696);transform-origin:0 0;">3 items</div><div class="a" style="left:960.80px;top:260.30px;width:11.50px;height:12.00px;background:#cce8ff;border:0.9px solid #7cc0ea;box-sizing:border-box;"></div><svg class="a" style="left:963.00px;top:263.20px;" width="8" height="7" viewBox="0 0 8 7"><rect x="0.2" y="0.2" width="1.6" height="1.6" fill="#e8e0d0"/><rect x="0.2" y="2.6" width="1.6" height="1.6" fill="#dfe8ff"/><rect x="0.2" y="5" width="1.6" height="1.6" fill="#f2b8b0"/><g stroke="#555" stroke-width="0.6"><path d="M2.8 1 L4.8 1 M5.6 1 L7.6 1 M2.8 3.4 L4.8 3.4 M5.6 3.4 L7.6 3.4 M2.8 5.8 L4.8 5.8 M5.6 5.8 L7.6 5.8"/></g></svg><svg class="a" style="left:974.30px;top:263.40px;" width="8" height="6.5" viewBox="0 0 8 6.5"><rect x="0.3" y="0.3" width="7.4" height="5.9" fill="#e6e6e6" stroke="#b8b8b8" stroke-width="0.5"/><rect x="1.2" y="1.2" width="5.6" height="4.1" fill="#9cc6ea"/><path d="M1.2 5.3 L3 3 L4.8 4.4 L6.8 3.4 L6.8 5.3Z" fill="#4f6f3f"/></svg><div class="a" style="left:548.00px;top:277.00px;width:442.00px;height:216.00px;background:rgba(0,0,0,.12);filter:blur(2.5px);"></div><div class="a" style="left:551.00px;top:278.00px;width:435.00px;height:210.00px;background:#fff;box-shadow:0 0 0 0.5px rgba(60,60,60,.35);"></div><svg class="a" style="left:555.70px;top:284.40px;overflow:visible;" width="8" height="5" viewBox="0 0 8 5"><g fill="#35b6f2"><rect x="0.5" y="-2.6" width="1.4" height="1.2"/><rect x="2.1" y="-2.6" width="1.4" height="1.2"/><rect x="0.5" y="-1.2" width="1.4" height="1.2"/><rect x="2.1" y="-1.2" width="1.4" height="1.2"/></g><path d="M0.9 2.4 Q1.3 0.8 2.6 0.8 L5.4 0.8 Q6.7 0.8 7.1 2.4Z" fill="#cdcdcd"/><rect x="0.5" y="2.3" width="7" height="2.3" rx="0.5" fill="#404040"/><rect x="5.9" y="3.0" width="1.1" height="0.9" fill="#35c435"/></svg><div class="a" style="left:567.30px;top:282.90px;width:0.60px;height:5.90px;background:#c8c8c8;"></div><svg class="a" style="left:573.00px;top:281.70px;" width="7" height="9" viewBox="0 0 7 9"><path d="M0.5 0.5 L4.5 0.5 L6.5 2.5 L6.5 8.5 L0.5 8.5Z" fill="#fff" stroke="#a8a8a8" stroke-width="0.5"/><path d="M1.6 4.8 L3 6.3 L5.6 3.2" stroke="#e8632b" stroke-width="0.8" fill="none"/></svg><svg class="a" style="left:585.00px;top:281.80px;" width="7" height="9" viewBox="0 0 7 9"><rect x="0.2" y="0.2" width="6.6" height="8.5" fill="#f3cf68"/><rect x="0.8" y="0.8" width="5.4" height="7.3" fill="#fbe18e"/><path d="M5.4 5.8 L6.8 6.6 L6.8 8.7 L5.4 8.7Z" fill="#eec35a"/></svg><svg class="a" style="left:595.80px;top:284.40px;" width="4.5" height="4.5" viewBox="0 0 4.5 4.5"><rect x="0.2" y="0" width="4" height="0.6" fill="#222"/><path d="M0.4 1.6 L4 1.6 L2.2 3.8Z" fill="#222"/></svg><div class="a" style="left:603.60px;top:282.90px;width:0.60px;height:5.90px;background:#c8c8c8;"></div><div class="a" style="left:669.70px;top:279.70px;width:99.00px;height:14.10px;background:#c3efa6;"></div><div class="t k" style="left:708.70px;top:284.77px;font-size:6.4px;color:#333;transform:scaleX(0.8679);transform-origin:0 0;">Beheren</div><div class="t k" style="left:775.80px;top:283.92px;font-size:6.4px;color:#999;transform:scaleX(0.9219);transform-origin:0 0;">W10x64_NL_2.vhdx (C:)</div><div class="a" style="left:924.20px;top:285.90px;width:5.60px;height:0.60px;background:#9a9a9a;"></div><div class="a" style="left:947.80px;top:283.70px;width:5.60px;height:5.00px;border:0.6px solid #9a9a9a;box-sizing:border-box;"></div><svg class="a" style="left:971.40px;top:283.20px;" width="6" height="6" viewBox="0 0 6 6"><path d="M0.3 0.3 L5.7 5.7 M5.7 0.3 L0.3 5.7" stroke="#9a9a9a" stroke-width="0.6"/></svg><div class="a" style="left:551.00px;top:294.00px;width:29.80px;height:12.00px;background:#1a6fc1;"></div><div class="t k" style="left:555.65px;top:297.92px;font-size:6.4px;color:#fff;transform:scaleX(0.8730);transform-origin:0 0;">Bestand</div><div class="t k" style="left:588.20px;top:297.92px;font-size:6.4px;color:#222;transform:scaleX(0.8879);transform-origin:0 0;">Start</div><div class="t k" style="left:615.60px;top:297.92px;font-size:6.4px;color:#222;transform:scaleX(0.8851);transform-origin:0 0;">Delen</div><div class="t k" style="left:646.50px;top:297.92px;font-size:6.4px;color:#222;transform:scaleX(0.8553);transform-origin:0 0;">Beeld</div><div class="t k" style="left:676.75px;top:297.92px;font-size:6.4px;color:#222;transform:scaleX(0.9563);transform-origin:0 0;">Hulpprogramma&#x27;s voor stations</div><div class="a" style="left:669.70px;top:294.00px;width:0.60px;height:12.00px;background:#dcdcdc;"></div><div class="a" style="left:768.70px;top:294.00px;width:0.60px;height:12.00px;background:#dcdcdc;"></div><div class="a" style="left:551.00px;top:306.00px;width:435.00px;height:0.60px;background:#e2e3e4;"></div><svg class="a" style="left:966.40px;top:298.70px;" width="4.2" height="2.6" viewBox="0 0 4.2 2.6"><path d="M0.5 0.5 L2.1 2.1 L3.7 0.5" stroke="#777" stroke-width="0.6" fill="none"/></svg><svg class="a" style="left:975.50px;top:296.70px;" width="7" height="7" viewBox="0 0 7 7"><circle cx="3.5" cy="3.5" r="3.3" fill="#1a73d9"/><text x="3.5" y="5.5" font-family="Liberation Sans" font-size="5.2" font-weight="bold" fill="#fff" text-anchor="middle">?</text></svg><svg class="a" style="left:557.00px;top:312.30px;" width="8" height="6" viewBox="0 0 8 6"><path d="M7.5 3 L1 3 M3.8 0.3 L1 3 L3.8 5.7" stroke="#c4c4c4" stroke-width="0.8" fill="none"/></svg><svg class="a" style="left:572.00px;top:312.30px;" width="8" height="6" viewBox="0 0 8 6"><path d="M0.5 3 L7 3 M4.2 0.3 L7 3 L4.2 5.7" stroke="#cfcfcf" stroke-width="0.7" fill="none"/></svg><svg class="a" style="left:586.80px;top:314.20px;" width="3.4" height="2.2" viewBox="0 0 3.4 2.2"><path d="M0.5 0.5 L1.7 1.7 L2.9 0.5" stroke="#8a8a8a" stroke-width="0.6" fill="none"/></svg><svg class="a" style="left:596.00px;top:311.80px;" width="6" height="7" viewBox="0 0 6 7"><path d="M3 7 L3 1 M0.4 3.6 L3 1 L5.6 3.6" stroke="#4a4a4a" stroke-width="1.1" fill="none"/></svg><div class="a" style="left:606.90px;top:309.50px;width:261.90px;height:11.60px;border:0.6px solid #d9d9d9;box-sizing:border-box;background:#fff;"></div><svg class="a" style="left:608.00px;top:314.60px;overflow:visible;" width="8" height="5" viewBox="0 0 8 5"><g fill="#35b6f2"><rect x="0.5" y="-2.6" width="1.4" height="1.2"/><rect x="2.1" y="-2.6" width="1.4" height="1.2"/><rect x="0.5" y="-1.2" width="1.4" height="1.2"/><rect x="2.1" y="-1.2" width="1.4" height="1.2"/></g><path d="M0.9 2.4 Q1.3 0.8 2.6 0.8 L5.4 0.8 Q6.7 0.8 7.1 2.4Z" fill="#cdcdcd"/><rect x="0.5" y="2.3" width="7" height="2.3" rx="0.5" fill="#404040"/><rect x="5.9" y="3.0" width="1.1" height="0.9" fill="#35c435"/></svg><svg class="a" style="left:620.10px;top:313.60px;" width="2.2" height="3.4" viewBox="0 0 2.2 3.4"><path d="M0.5 0.5 L1.7 1.7 L0.5 2.9" stroke="#333" stroke-width="0.85" fill="none"/></svg><div class="t k" style="left:627.70px;top:313.22px;font-size:6.4px;color:#111;transform:scaleX(0.9030);transform-origin:0 0;">Deze pc</div><svg class="a" style="left:653.60px;top:313.60px;" width="2.2" height="3.4" viewBox="0 0 2.2 3.4"><path d="M0.5 0.5 L1.7 1.7 L0.5 2.9" stroke="#333" stroke-width="0.85" fill="none"/></svg><div class="t k" style="left:660.50px;top:313.22px;font-size:6.4px;color:#111;transform:scaleX(0.9219);transform-origin:0 0;">W10x64_NL_2.vhdx (C:)</div><svg class="a" style="left:852.90px;top:314.15px;" width="4.8" height="2.9" viewBox="0 0 4.8 2.9"><path d="M0.5 0.5 L2.4 2.4 L4.3 0.5" stroke="#333" stroke-width="1.0" fill="none"/></svg><div class="a" style="left:859.60px;top:310.10px;width:0.50px;height:10.40px;background:#e3e3e3;"></div><svg class="a" style="left:861.30px;top:312.10px;" width="6" height="6.5" viewBox="0 0 6 6.5"><path d="M4.9 2.4 A2.4 2.4 0 1 1 3.0 1.0" stroke="#555" stroke-width="0.95" fill="none"/><path d="M2.3 -0.1 L3.9 1.1 L2.4 2.3" stroke="#555" stroke-width="0.8" fill="none"/></svg><div class="a" style="left:875.00px;top:309.50px;width:104.70px;height:11.60px;border:0.6px solid #d9d9d9;box-sizing:border-box;background:#fff;"></div><div class="t k" style="left:879.30px;top:313.22px;font-size:6.4px;color:#6d6d6d;transform:scaleX(0.9263);transform-origin:0 0;">Zoeken in W10x64_NL_2.vhdx...</div><svg class="a" style="left:969.70px;top:312.00px;" width="7" height="7" viewBox="0 0 7 7"><circle cx="4.2" cy="2.8" r="2.1" stroke="#333" stroke-width="0.7" fill="none"/><path d="M2.7 4.3 L0.6 6.4" stroke="#333" stroke-width="0.9"/></svg><div class="a" style="left:551.00px;top:429.00px;width:113.00px;height:12.00px;background:#d9d9d9;"></div><svg class="a" style="left:563.60px;top:331.40px;" width="9" height="8" viewBox="0 0 9 8"><rect x="0.3" y="0.3" width="8.4" height="5.6" fill="#5cb8f2" stroke="#9bb" stroke-width="0.4"/><rect x="3.5" y="6" width="2" height="1" fill="#9aa"/><rect x="2" y="7" width="5" height="0.8" fill="#aab"/></svg><div class="t k" style="left:575.00px;top:333.12px;font-size:6.4px;color:#111;transform:scaleX(0.9073);transform-origin:0 0;">Deze pc</div><svg class="a" style="left:568.30px;top:343.60px;" width="8" height="8" viewBox="0 0 8 8"><path d="M4 0.3 L7.7 2.2 L7.7 6 L4 7.8 L0.3 6 L0.3 2.2Z" fill="#29a9df"/><path d="M4 0.3 L7.7 2.2 L4 4 L0.3 2.2Z" fill="#8fdcff"/><path d="M4 4 L7.7 2.2 L7.7 6 L4 7.8Z" fill="#1b82bd"/></svg><div class="t k" style="left:579.20px;top:345.32px;font-size:6.4px;color:#111;transform:scaleX(0.9824);transform-origin:0 0;">3D-objecten</div><svg class="a" style="left:567.80px;top:356.50px;" width="9" height="7" viewBox="0 0 9 7"><rect x="0.3" y="0.3" width="8.4" height="6.4" fill="#e8eef3" stroke="#8a9aa8" stroke-width="0.5"/><rect x="1.2" y="1.2" width="6.6" height="4.6" fill="#b9d4ea"/><path d="M1.2 5.8 L3.5 3.3 L5.5 5 L7.8 3.8 L7.8 5.8Z" fill="#4f6f8f"/></svg><div class="t k" style="left:579.20px;top:357.72px;font-size:6.4px;color:#111;transform:scaleX(0.9876);transform-origin:0 0;">Afbeeldingen</div><svg class="a" style="left:567.80px;top:369.00px;" width="9" height="7" viewBox="0 0 9 7"><rect x="0.3" y="0.3" width="8.4" height="6.4" fill="#2f8be0"/><rect x="0.3" y="5.5" width="8.4" height="1.2" fill="#1a5fae"/></svg><div class="t k" style="left:579.20px;top:370.22px;font-size:6.4px;color:#111;transform:scaleX(0.9531);transform-origin:0 0;">Bureaublad</div><svg class="a" style="left:568.80px;top:380.50px;" width="7" height="9" viewBox="0 0 7 9"><path d="M0.5 0.5 L4.5 0.5 L6.5 2.5 L6.5 8.5 L0.5 8.5Z" fill="#fff" stroke="#9aa7b4" stroke-width="0.5"/><path d="M1.8 3.5 L5 3.5 M1.8 5 L5 5 M1.8 6.5 L5 6.5" stroke="#5b9bd5" stroke-width="0.5"/></svg><div class="t k" style="left:579.20px;top:382.72px;font-size:6.4px;color:#111;transform:scaleX(0.9866);transform-origin:0 0;">Documenten</div><svg class="a" style="left:568.30px;top:393.10px;" width="8" height="9" viewBox="0 0 8 9"><path d="M2.8 0.3 L5.2 0.3 L5.2 4.5 L7.6 4.5 L4 8.6 L0.4 4.5 L2.8 4.5Z" fill="#2a7bd4"/></svg><div class="t k" style="left:579.20px;top:395.32px;font-size:6.4px;color:#111;transform:scaleX(0.9665);transform-origin:0 0;">Downloads</div><svg class="a" style="left:568.80px;top:405.70px;" width="7" height="9" viewBox="0 0 7 9"><path d="M2.5 0.3 L2.5 6.5" stroke="#2a86e0" stroke-width="0.9"/><ellipse cx="1.6" cy="7" rx="1.5" ry="1.2" fill="#2a86e0"/><path d="M2.5 0.3 Q5.5 1.5 6 4 Q4.5 2.5 2.5 2.6Z" fill="#2a86e0"/></svg><div class="t k" style="left:579.20px;top:407.92px;font-size:6.4px;color:#111;transform:scaleX(0.9768);transform-origin:0 0;">Muziek</div><svg class="a" style="left:568.80px;top:418.40px;" width="7" height="8" viewBox="0 0 7 8"><rect x="0" y="0" width="7" height="8" fill="#303030"/><rect x="1.4" y="1" width="4.2" height="6" fill="#2f6fd1"/><rect x="1.4" y="4" width="4.2" height="3" fill="#6a4cc4"/><g fill="#bbb"><rect x="0.3" y="0.8" width="0.7" height="0.8"/><rect x="0.3" y="3.5" width="0.7" height="0.8"/><rect x="0.3" y="6.2" width="0.7" height="0.8"/><rect x="6" y="0.8" width="0.7" height="0.8"/><rect x="6" y="3.5" width="0.7" height="0.8"/><rect x="6" y="6.2" width="0.7" height="0.8"/></g></svg><div class="t k" style="left:579.20px;top:420.12px;font-size:6.4px;color:#111;transform:scaleX(0.9577);transform-origin:0 0;">Video&#x27;s</div><svg class="a" style="left:568.30px;top:434.00px;overflow:visible;" width="8" height="5" viewBox="0 0 8 5"><g fill="#35b6f2"><rect x="0.5" y="-2.6" width="1.4" height="1.2"/><rect x="2.1" y="-2.6" width="1.4" height="1.2"/><rect x="0.5" y="-1.2" width="1.4" height="1.2"/><rect x="2.1" y="-1.2" width="1.4" height="1.2"/></g><path d="M0.9 2.4 Q1.3 0.8 2.6 0.8 L5.4 0.8 Q6.7 0.8 7.1 2.4Z" fill="#cdcdcd"/><rect x="0.5" y="2.3" width="7" height="2.3" rx="0.5" fill="#404040"/><rect x="5.9" y="3.0" width="1.1" height="0.9" fill="#35c435"/></svg><div class="t k" style="left:579.20px;top:432.72px;font-size:6.4px;color:#111;transform:scaleX(0.9162);transform-origin:0 0;">W10x64_NL_2.vhdx (C:)</div><svg class="a" style="left:568.30px;top:446.50px;overflow:visible;" width="8" height="5" viewBox="0 0 8 5"><path d="M0.9 2.4 Q1.3 0.8 2.6 0.8 L5.4 0.8 Q6.7 0.8 7.1 2.4Z" fill="#cdcdcd"/><rect x="0.5" y="2.3" width="7" height="2.3" rx="0.5" fill="#404040"/><rect x="5.9" y="3.0" width="1.1" height="0.9" fill="#35c435"/></svg><div class="t k" style="left:579.20px;top:445.22px;font-size:6.4px;color:#111;transform:scaleX(0.8602);transform-origin:0 0;">SSD_W10 (D:)</div><svg class="a" style="left:568.30px;top:458.90px;overflow:visible;" width="8" height="5" viewBox="0 0 8 5"><path d="M0.9 2.4 Q1.3 0.8 2.6 0.8 L5.4 0.8 Q6.7 0.8 7.1 2.4Z" fill="#cdcdcd"/><rect x="0.5" y="2.3" width="7" height="2.3" rx="0.5" fill="#404040"/><rect x="5.9" y="3.0" width="1.1" height="0.9" fill="#35c435"/></svg><div class="t k" style="left:579.20px;top:457.62px;font-size:6.4px;color:#111;transform:scaleX(0.8498);transform-origin:0 0;">SSD_LINUX (E:)</div><svg class="a" style="left:568.30px;top:471.30px;overflow:visible;" width="8" height="5" viewBox="0 0 8 5"><path d="M0.9 2.4 Q1.3 0.8 2.6 0.8 L5.4 0.8 Q6.7 0.8 7.1 2.4Z" fill="#cdcdcd"/><rect x="0.5" y="2.3" width="7" height="2.3" rx="0.5" fill="#404040"/><rect x="5.9" y="3.0" width="1.1" height="0.9" fill="#35c435"/></svg><div class="t k" style="left:579.20px;top:470.02px;font-size:6.4px;color:#111;transform:scaleX(0.8681);transform-origin:0 0;">1_BOOT (F:)</div><div class="a" style="left:665.60px;top:323.50px;width:7.60px;height:153.50px;background:#f0f0f0;"></div><svg class="a" style="left:667.00px;top:327.05px;" width="4.8" height="2.9" viewBox="0 0 4.8 2.9"><path d="M0.5 2.4 L2.4 0.5 L4.3 2.4" stroke="#505050" stroke-width="1.0" fill="none"/></svg><svg class="a" style="left:667.00px;top:471.05px;" width="4.8" height="2.9" viewBox="0 0 4.8 2.9"><path d="M0.5 0.5 L2.4 2.4 L4.3 0.5" stroke="#505050" stroke-width="1.0" fill="none"/></svg><div class="a" style="left:666.40px;top:375.00px;width:6.00px;height:17.40px;background:#cdcdcd;"></div><div class="t k" style="left:684.70px;top:329.42px;font-size:6.4px;color:#4c607a;transform:scaleX(0.9080);transform-origin:0 0;">Naam</div><svg class="a" style="left:735.00px;top:325.10px;" width="4.2" height="2.6" viewBox="0 0 4.2 2.6"><path d="M0.5 2.1 L2.1 0.5 L3.7 2.1" stroke="#8a8a8a" stroke-width="0.6" fill="none"/></svg><div class="a" style="left:794.20px;top:325.40px;width:0.60px;height:12.30px;background:#ebebeb;"></div><div class="t k" style="left:797.70px;top:329.42px;font-size:6.4px;color:#4c607a;transform:scaleX(0.9553);transform-origin:0 0;">Gewijzigd op</div><div class="a" style="left:869.30px;top:325.40px;width:0.60px;height:12.30px;background:#ebebeb;"></div><div class="t k" style="left:872.80px;top:329.42px;font-size:6.4px;color:#4c607a;transform:scaleX(0.9010);transform-origin:0 0;">Type</div><div class="a" style="left:931.70px;top:325.40px;width:0.60px;height:12.30px;background:#ebebeb;"></div><div class="t k" style="left:935.10px;top:329.42px;font-size:6.4px;color:#4c607a;transform:scaleX(0.9746);transform-origin:0 0;">Grootte</div><div class="a" style="left:973.20px;top:325.40px;width:0.60px;height:12.30px;background:#ebebeb;"></div><div class="a" style="left:683.00px;top:341.00px;width:288.00px;height:11.20px;background:#e5f3ff;"></div><svg class="a" style="left:686.00px;top:342.40px;" width="8" height="9" viewBox="0 0 8 9"><rect x="0.2" y="0.2" width="6.6" height="8.3" fill="#f3cf68"/><rect x="0.8" y="0.8" width="5.4" height="7.1" fill="#fbe18e"/><path d="M5.4 5.8 L6.8 6.6 L6.8 8.5 L5.4 8.5Z" fill="#eec35a"/></svg><div class="t k" style="left:695.60px;top:344.42px;font-size:6.4px;color:#111;transform:scaleX(0.9799);transform-origin:0 0;">Boot</div><div class="t k" style="left:797.70px;top:344.42px;font-size:6.4px;color:#6d6d6d;transform:scaleX(0.9045);transform-origin:0 0;">26-06-2019 17:40</div><div class="t k" style="left:872.80px;top:344.42px;font-size:6.4px;color:#6d6d6d;transform:scaleX(0.9327);transform-origin:0 0;">Bestandsmap</div><svg class="a" style="left:686.00px;top:353.33px;" width="8" height="9" viewBox="0 0 8 9"><rect x="0.2" y="0.2" width="6.6" height="8.3" fill="#f3cf68"/><rect x="0.8" y="0.8" width="5.4" height="7.1" fill="#fbe18e"/><path d="M5.4 5.8 L6.8 6.6 L6.8 8.5 L5.4 8.5Z" fill="#eec35a"/></svg><div class="t k" style="left:695.60px;top:355.35px;font-size:6.4px;color:#111;transform:scaleX(0.7634);transform-origin:0 0;">EFI</div><div class="t k" style="left:797.70px;top:355.35px;font-size:6.4px;color:#6d6d6d;transform:scaleX(0.9045);transform-origin:0 0;">26-06-2019 17:40</div><div class="t k" style="left:872.80px;top:355.35px;font-size:6.4px;color:#6d6d6d;transform:scaleX(0.9327);transform-origin:0 0;">Bestandsmap</div><svg class="a" style="left:686.00px;top:364.26px;" width="8" height="9" viewBox="0 0 8 9"><rect x="0.2" y="0.2" width="6.6" height="8.3" fill="#f3cf68"/><rect x="0.8" y="0.8" width="5.4" height="7.1" fill="#fbe18e"/><path d="M5.4 5.8 L6.8 6.6 L6.8 8.5 L5.4 8.5Z" fill="#eec35a"/></svg><div class="t k" style="left:695.60px;top:366.28px;font-size:6.4px;color:#111;transform:scaleX(0.9202);transform-origin:0 0;">Gebruikers</div><div class="t k" style="left:797.70px;top:366.28px;font-size:6.4px;color:#6d6d6d;transform:scaleX(0.9045);transform-origin:0 0;">26-06-2019 17:14</div><div class="t k" style="left:872.80px;top:366.28px;font-size:6.4px;color:#6d6d6d;transform:scaleX(0.9327);transform-origin:0 0;">Bestandsmap</div><svg class="a" style="left:686.00px;top:375.19px;" width="8" height="9" viewBox="0 0 8 9"><rect x="0.2" y="0.2" width="6.6" height="8.3" fill="#f3cf68"/><rect x="0.8" y="0.8" width="5.4" height="7.1" fill="#fbe18e"/><path d="M5.4 5.8 L6.8 6.6 L6.8 8.5 L5.4 8.5Z" fill="#eec35a"/></svg><div class="t k" style="left:695.60px;top:377.21px;font-size:6.4px;color:#111;transform:scaleX(0.9292);transform-origin:0 0;">PerfLogs</div><div class="t k" style="left:797.70px;top:377.21px;font-size:6.4px;color:#6d6d6d;transform:scaleX(0.9045);transform-origin:0 0;">19-03-2019 05:52</div><div class="t k" style="left:872.80px;top:377.21px;font-size:6.4px;color:#6d6d6d;transform:scaleX(0.9327);transform-origin:0 0;">Bestandsmap</div><svg class="a" style="left:686.00px;top:386.12px;" width="8" height="9" viewBox="0 0 8 9"><rect x="0.2" y="0.2" width="6.6" height="8.3" fill="#f3cf68"/><rect x="0.8" y="0.8" width="5.4" height="7.1" fill="#fbe18e"/><path d="M5.4 5.8 L6.8 6.6 L6.8 8.5 L5.4 8.5Z" fill="#eec35a"/></svg><div class="t k" style="left:695.60px;top:388.14px;font-size:6.4px;color:#111;transform:scaleX(0.9340);transform-origin:0 0;">Program Files</div><div class="t k" style="left:797.70px;top:388.14px;font-size:6.4px;color:#6d6d6d;transform:scaleX(0.9045);transform-origin:0 0;">26-06-2019 17:18</div><div class="t k" style="left:872.80px;top:388.14px;font-size:6.4px;color:#6d6d6d;transform:scaleX(0.9327);transform-origin:0 0;">Bestandsmap</div><svg class="a" style="left:686.00px;top:397.05px;" width="8" height="9" viewBox="0 0 8 9"><rect x="0.2" y="0.2" width="6.6" height="8.3" fill="#f3cf68"/><rect x="0.8" y="0.8" width="5.4" height="7.1" fill="#fbe18e"/><path d="M5.4 5.8 L6.8 6.6 L6.8 8.5 L5.4 8.5Z" fill="#eec35a"/></svg><div class="t k" style="left:695.60px;top:399.07px;font-size:6.4px;color:#111;transform:scaleX(0.9290);transform-origin:0 0;">Program Files (x86)</div><div class="t k" style="left:797.70px;top:399.07px;font-size:6.4px;color:#6d6d6d;transform:scaleX(0.9045);transform-origin:0 0;">12-07-2019 08:17</div><div class="t k" style="left:872.80px;top:399.07px;font-size:6.4px;color:#6d6d6d;transform:scaleX(0.9327);transform-origin:0 0;">Bestandsmap</div><svg class="a" style="left:686.00px;top:407.98px;" width="8" height="9" viewBox="0 0 8 9"><rect x="0.2" y="0.2" width="6.6" height="8.3" fill="#f3cf68"/><rect x="0.8" y="0.8" width="5.4" height="7.1" fill="#fbe18e"/><path d="M5.4 5.8 L6.8 6.6 L6.8 8.5 L5.4 8.5Z" fill="#eec35a"/></svg><div class="t k" style="left:695.60px;top:410.00px;font-size:6.4px;color:#111;transform:scaleX(0.9158);transform-origin:0 0;">RegBackup</div><div class="t k" style="left:797.70px;top:410.00px;font-size:6.4px;color:#6d6d6d;transform:scaleX(0.9045);transform-origin:0 0;">26-06-2019 17:21</div><div class="t k" style="left:872.80px;top:410.00px;font-size:6.4px;color:#6d6d6d;transform:scaleX(0.9327);transform-origin:0 0;">Bestandsmap</div><svg class="a" style="left:686.00px;top:418.91px;" width="8" height="9" viewBox="0 0 8 9"><rect x="0.2" y="0.2" width="6.6" height="8.3" fill="#f3cf68"/><rect x="0.8" y="0.8" width="5.4" height="7.1" fill="#fbe18e"/><path d="M5.4 5.8 L6.8 6.6 L6.8 8.5 L5.4 8.5Z" fill="#eec35a"/></svg><div class="t k" style="left:695.60px;top:420.93px;font-size:6.4px;color:#111;transform:scaleX(0.9505);transform-origin:0 0;">registry_backup_portable</div><div class="t k" style="left:797.70px;top:420.93px;font-size:6.4px;color:#6d6d6d;transform:scaleX(0.9045);transform-origin:0 0;">26-06-2019 17:20</div><div class="t k" style="left:872.80px;top:420.93px;font-size:6.4px;color:#6d6d6d;transform:scaleX(0.9327);transform-origin:0 0;">Bestandsmap</div><svg class="a" style="left:686.00px;top:429.84px;" width="8" height="9" viewBox="0 0 8 9"><rect x="0.2" y="0.2" width="6.6" height="8.3" fill="#f3cf68"/><rect x="0.8" y="0.8" width="5.4" height="7.1" fill="#fbe18e"/><path d="M5.4 5.8 L6.8 6.6 L6.8 8.5 L5.4 8.5Z" fill="#eec35a"/></svg><div class="t k" style="left:695.60px;top:431.86px;font-size:6.4px;color:#111;transform:scaleX(0.9745);transform-origin:0 0;">Windows</div><div class="t k" style="left:797.70px;top:431.86px;font-size:6.4px;color:#6d6d6d;transform:scaleX(0.9045);transform-origin:0 0;">12-07-2019 08:17</div><div class="t k" style="left:872.80px;top:431.86px;font-size:6.4px;color:#6d6d6d;transform:scaleX(0.9327);transform-origin:0 0;">Bestandsmap</div><div class="t k" style="left:558.80px;top:480.12px;font-size:6.4px;color:#333;transform:scaleX(0.9454);transform-origin:0 0;">9 items</div><div class="a" style="left:961.00px;top:476.40px;width:11.50px;height:12.00px;background:#cce8ff;border:0.9px solid #7cc0ea;box-sizing:border-box;"></div><svg class="a" style="left:963.20px;top:479.30px;" width="8" height="7" viewBox="0 0 8 7"><rect x="0.2" y="0.2" width="1.6" height="1.6" fill="#e8e0d0"/><rect x="0.2" y="2.6" width="1.6" height="1.6" fill="#dfe8ff"/><rect x="0.2" y="5" width="1.6" height="1.6" fill="#f2b8b0"/><g stroke="#555" stroke-width="0.6"><path d="M2.8 1 L4.8 1 M5.6 1 L7.6 1 M2.8 3.4 L4.8 3.4 M5.6 3.4 L7.6 3.4 M2.8 5.8 L4.8 5.8 M5.6 5.8 L7.6 5.8"/></g></svg><svg class="a" style="left:974.50px;top:479.50px;" width="8" height="6.5" viewBox="0 0 8 6.5"><rect x="0.3" y="0.3" width="7.4" height="5.9" fill="#e6e6e6" stroke="#b8b8b8" stroke-width="0.5"/><rect x="1.2" y="1.2" width="5.6" height="4.1" fill="#9cc6ea"/><path d="M1.2 5.3 L3 3 L4.8 4.4 L6.8 3.4 L6.8 5.3Z" fill="#4f6f3f"/></svg><svg class="a" style="left:875.80px;top:350.80px;" width="7" height="10" viewBox="0 0 7 10"><path d="M0.4 0.4 L0.4 8.2 L2.3 6.6 L3.5 9.3 L4.6 8.8 L3.5 6.2 L5.9 6.2Z" fill="#fff" stroke="#000" stroke-width="0.55"/></svg><div class="a" style="left:622.00px;top:272.00px;width:78.00px;height:6.00px;background:linear-gradient(90deg,#2a9ce8,#1e90e2);"></div><div class="a" style="left:703.00px;top:272.00px;width:98.50px;height:6.00px;background:linear-gradient(90deg,#1e8ce0,#1580da);"></div><div class="a" style="left:621.50px;top:272.00px;width:1.00px;height:6.00px;background:#4ab4f0;"></div><div class="a" style="left:801.00px;top:272.00px;width:1.00px;height:6.00px;background:#3ab0e8;"></div><div class="a" style="left:699.00px;top:272.00px;width:4.00px;height:6.00px;background:#0a70d0;"></div><div class="a" style="left:0.00px;top:542.00px;width:1000.00px;height:21.00px;background:#d3e4ee;"></div><div class="a" style="left:0.00px;top:542.00px;width:25.00px;height:21.00px;background:#cfe4ef;"></div><svg class="a" style="left:8.00px;top:548.00px;" width="10" height="9" viewBox="0 0 10 9"><g fill="#000"><path d="M0 1.2 L4 0.6 L4 4.2 L0 4.2Z"/><path d="M4.6 0.5 L9.5 0 L9.5 4.2 L4.6 4.2Z"/><path d="M0 4.8 L4 4.8 L4 8.4 L0 7.8Z"/><path d="M4.6 4.8 L9.5 4.8 L9.5 9 L4.6 8.5Z"/></g></svg><div class="a" style="left:25.00px;top:542.00px;width:179.00px;height:21.00px;background:#fff;"></div><svg class="a" style="left:31.00px;top:548.00px;" width="8" height="9" viewBox="0 0 8 9"><circle cx="5" cy="3.2" r="2.6" stroke="#222" stroke-width="0.8" fill="none"/><path d="M3.2 5 L0.6 7.8" stroke="#222" stroke-width="0.9"/></svg><div class="t k" style="left:45.00px;top:549.18px;font-size:7.9px;color:#222;transform:scaleX(0.9972);transform-origin:0 0;">Typ hier om te zoeken</div><svg class="a" style="left:211.50px;top:548.00px;" width="10" height="8.5" viewBox="0 0 10 8.5"><g fill="none" stroke="#333" stroke-width="0.8"><rect x="2.2" y="1" width="5.6" height="6.5"/></g><g fill="#333"><rect x="0" y="1.5" width="1.4" height="1"/><rect x="0" y="5.8" width="1.4" height="1"/><rect x="8.6" y="1.5" width="1.4" height="1"/><rect x="8.6" y="5.8" width="1.4" height="1"/></g></svg><svg class="a" style="left:237.50px;top:546.80px;" width="12" height="11.5" viewBox="0 0 12 11.5"><path d="M0.8 6 Q1 0.5 6.3 0.5 Q11.5 0.6 11.4 6.4 L3.6 6.4 Q3.8 9.3 7 9.3 Q9.2 9.3 11 8.2 L11 10.6 Q9.2 11.4 6.6 11.4 Q0.8 11.2 0.8 6Z M3.7 4.4 L8.7 4.4 Q8.5 2.5 6.2 2.5 Q4.2 2.5 3.7 4.4Z" fill="#0f78d7" fill-rule="evenodd"/></svg><svg class="a" style="left:263.00px;top:548.00px;" width="11.5" height="10" viewBox="0 0 11.5 10"><path d="M0 0.5 L4 0.5 L5 1.8 L11.5 1.8 L11.5 9.5 L0 9.5Z" fill="#e8b339"/><rect x="0" y="2.6" width="11.5" height="7" fill="#f8d46b"/><path d="M3 6 L8.5 6 L8.5 9.5 L7 9.5 L7 7.5 L4.5 7.5 L4.5 9.5 L3 9.5Z" fill="#2a7bd1"/></svg><div class="a" style="left:258.00px;top:561.80px;width:21.00px;height:1.20px;background:#2a77c9;"></div><svg class="a" style="left:287.70px;top:546.30px;" width="13" height="12" viewBox="0 0 13 12"><path d="M4 3 Q4 0.6 6.5 0.6 Q9 0.6 9 3" stroke="#111" stroke-width="0.9" fill="none"/><rect x="0.5" y="3" width="12" height="8.8" fill="#111"/><rect x="3.6" y="4.6" width="2.6" height="2.6" fill="#f25022"/><rect x="6.8" y="4.6" width="2.6" height="2.6" fill="#7fba00"/><rect x="3.6" y="7.8" width="2.6" height="2.6" fill="#00a4ef"/><rect x="6.8" y="7.8" width="2.6" height="2.6" fill="#ffb900"/></svg><svg class="a" style="left:312.90px;top:547.00px;" width="13.5" height="10" viewBox="0 0 13.5 10"><path d="M0.3 3.5 L6.75 0.3 L13.2 3.5 L13.2 9.7 L0.3 9.7Z" fill="#333"/><path d="M0.8 4 L6.75 7.8 L12.7 4" stroke="#ddd" stroke-width="0.7" fill="none"/></svg><svg class="a" style="left:339.30px;top:547.00px;" width="12" height="11" viewBox="0 0 12 11"><rect x="0.4" y="0.4" width="11.2" height="10.2" fill="#e6ecf8" stroke="#4a6cc0" stroke-width="0.8"/><text x="6" y="8.6" font-family="Liberation Serif" font-size="8" font-style="italic" font-weight="bold" fill="#2a4fb0" text-anchor="middle">W</text></svg><svg class="a" style="left:364.70px;top:547.00px;" width="12" height="11" viewBox="0 0 12 11"><rect x="0.4" y="0.4" width="11.2" height="10.2" fill="#e2f0dc" stroke="#4f8a48" stroke-width="0.8"/><path d="M3.6 2.8 L8.4 8.3 M8.4 2.8 L3.6 8.3" stroke="#2f8f2f" stroke-width="1.5"/></svg><svg class="a" style="left:390.20px;top:546.70px;" width="12" height="12" viewBox="0 0 12 12"><circle cx="6" cy="6" r="5.8" fill="#db4437"/><path d="M6 6 L0.98 3.1 A5.8 5.8 0 0 0 6 11.8 Z" fill="#0f9d58"/><path d="M6 6 L6 11.8 A5.8 5.8 0 0 0 11.02 3.1 Z" fill="#ffcd40"/><path d="M6 3.3 L11.02 3.1 L6 6Z" fill="#db4437"/><circle cx="6" cy="6" r="2.7" fill="#fff"/><circle cx="6" cy="6" r="2.1" fill="#4285f4"/></svg><div class="a" style="left:409.10px;top:542.00px;width:25.20px;height:21.00px;background:#e5eff5;"></div><svg class="a" style="left:416.20px;top:546.80px;" width="11" height="11" viewBox="0 0 11 11"><circle cx="5.5" cy="5.5" r="5.4" fill="#5b7ba6"/><path d="M2.8 7.4 L5.5 3.2 L8.2 7.4" stroke="#fff" stroke-width="1.3" stroke-linejoin="round" fill="none"/></svg><div class="a" style="left:409.10px;top:561.80px;width:25.20px;height:1.20px;background:#2a77c9;"></div><svg class="a" style="left:440.60px;top:546.50px;" width="13" height="12" viewBox="0 0 13 12"><path d="M1 3 L9.5 0.8 L11.5 9 L3 11.2Z" fill="#7cc8d8" stroke="#5a9fb0" stroke-width="0.4"/><path d="M1.8 3.5 L9 1.6 L10.7 8.6 L3.5 10.5Z" fill="#b8e6ef"/><path d="M9.5 0.8 L11 0.4 L13 8.6 L11.5 9Z" fill="#d8c9a8" stroke="#a89a78" stroke-width="0.3"/></svg><div class="a" style="left:435.20px;top:561.80px;width:22.50px;height:1.20px;background:#2a77c9;"></div><svg class="a" style="left:850.40px;top:549.30px;" width="9" height="7" viewBox="0 0 9 7"><path d="M0 6.5 L5 0 L5.6 3 Z" fill="#e0201c"/><path d="M4.6 3 L5.6 3 L8.6 6.5 L5.2 4.5Z" fill="#2ebd3a"/></svg><svg class="a" style="left:863.30px;top:548.50px;" width="8.5" height="8" viewBox="0 0 8.5 8"><circle cx="3" cy="3" r="2.8" fill="#1aa3e6"/><circle cx="5.5" cy="5" r="2.8" fill="#1aa3e6"/><circle cx="4.25" cy="4" r="3.4" fill="#1aa3e6"/><text x="4.3" y="6.3" font-family="Liberation Sans" font-size="5.5" font-weight="bold" fill="#fff" text-anchor="middle">S</text></svg><svg class="a" style="left:875.20px;top:549.30px;" width="9.5" height="7" viewBox="0 0 9.5 7"><path d="M1.8 6.3 Q0.3 6.2 0.5 4.6 Q0.8 3.3 2.2 3.5 Q2.7 0.7 5.1 0.8 Q7.5 1 7.7 3.4 Q9.2 3.6 9 5 Q8.8 6.3 7.6 6.3Z" fill="none" stroke="#555" stroke-width="0.75"/></svg><svg class="a" style="left:889.20px;top:547.80px;" width="6.5" height="8.8" viewBox="0 0 6.5 8.8"><rect x="1.5" y="0.3" width="3.5" height="2.8" fill="none" stroke="#444" stroke-width="0.6"/><rect x="0.3" y="3.1" width="5.9" height="5.4" rx="0.8" fill="#f0f0f0" stroke="#444" stroke-width="0.6"/></svg><svg class="a" style="left:900.00px;top:547.80px;" width="9" height="9" viewBox="0 0 9 9"><path d="M4.3 0.3 L8 1.5 L8 4.5 Q8 7.5 4.3 8.6 Q0.6 7.5 0.6 4.5 L0.6 1.5Z" fill="#fff" stroke="#444" stroke-width="0.6"/><path d="M4.3 0.8 L4.3 8 M1 4 L7.6 4" stroke="#444" stroke-width="0.5"/><circle cx="6.6" cy="6.7" r="2.2" fill="#2aa84a"/><path d="M5.6 6.7 L6.4 7.5 L7.7 6" stroke="#fff" stroke-width="0.6" fill="none"/></svg><svg class="a" style="left:913.20px;top:548.50px;" width="9" height="8" viewBox="0 0 9 8"><rect x="0.3" y="0.3" width="8.2" height="5.5" fill="none" stroke="#333" stroke-width="0.6"/><rect x="0.3" y="0.3" width="2.5" height="5.5" fill="#333"/><path d="M4.5 5.8 L4.5 7.6 M2.5 7.6 L6.5 7.6" stroke="#333" stroke-width="0.6"/></svg><svg class="a" style="left:924.80px;top:548.50px;" width="9.5" height="8" viewBox="0 0 9.5 8"><path d="M0.5 2.8 L2.3 2.8 L4.8 0.5 L4.8 7.5 L2.3 5.2 L0.5 5.2Z" fill="none" stroke="#333" stroke-width="0.6"/><path d="M6.2 2.2 Q7 4 6.2 5.8 M7.6 1 Q9 4 7.6 7" stroke="#333" stroke-width="0.6" fill="none"/></svg><div class="t k" style="left:947.30px;top:544.90px;font-size:6.6px;color:#111;transform:scaleX(0.8477);transform-origin:0 0;">18:43</div><div class="t k" style="left:939.55px;top:553.90px;font-size:6.6px;color:#111;transform:scaleX(0.8739);transform-origin:0 0;">14-07-2019</div><svg class="a" style="left:978.30px;top:547.80px;" width="9" height="9" viewBox="0 0 9 9"><path d="M0.4 0.4 L8.6 0.4 L8.6 6.3 L5.4 6.3 L3.3 8.5 L3.3 6.3 L0.4 6.3Z" fill="none" stroke="#333" stroke-width="0.6"/></svg><div class="a" style="left:997.50px;top:542.00px;width:0.60px;height:21.00px;background:#b7c9d4;"></div></body></html>
